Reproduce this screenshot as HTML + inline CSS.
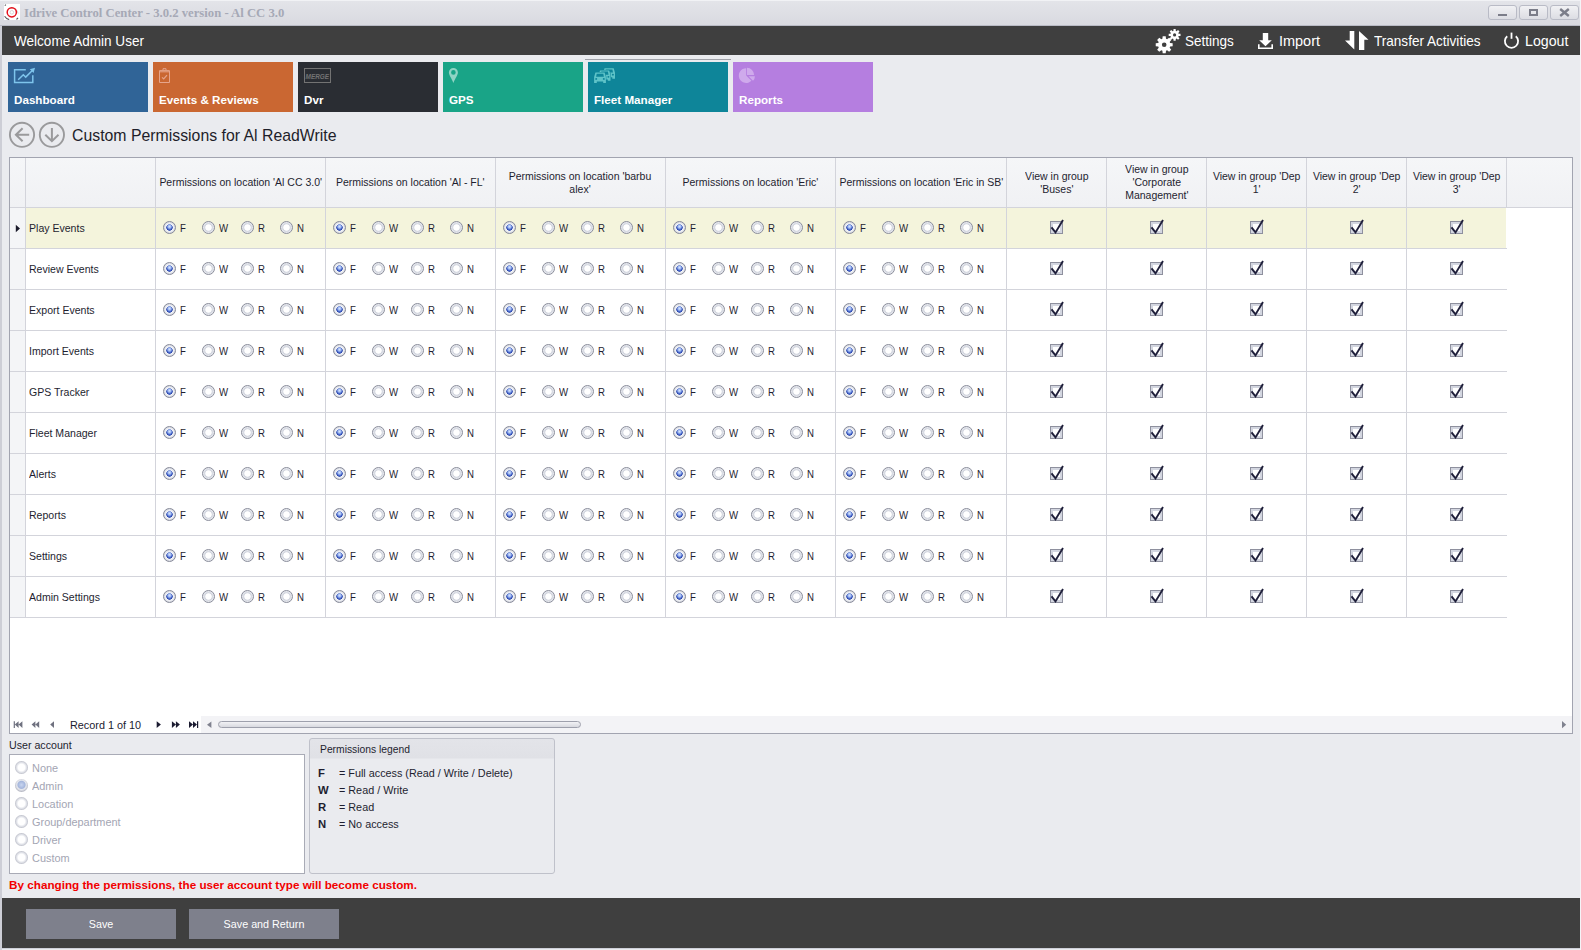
<!DOCTYPE html><html><head><meta charset="utf-8"><style>
*{margin:0;padding:0;box-sizing:border-box}
html,body{width:1581px;height:950px;overflow:hidden;background:#EAEBEF;font-family:'Liberation Sans',sans-serif}
.a{position:absolute}
.wb{position:absolute;top:5px;width:29px;height:15px;border:1px solid #B9BBC6;border-radius:3px;background:linear-gradient(#F1F1F4,#DCDDE3)}
.rd{position:absolute;width:13px;height:13px;border-radius:50%;border:1.2px solid #8A8D9B;background:radial-gradient(circle at 50% 50%,#fff 0,#fff 2.8px,#D3D6DF 3.6px,#D9DCE4 4.3px,#E9EBF0 5.3px)}
.rs{position:absolute;width:13px;height:13px;border-radius:50%;border:1.2px solid #868998;background:radial-gradient(circle at 50% 40%,rgba(220,233,255,.95) 0,rgba(175,200,248,.8) 1.6px,rgba(120,150,230,0) 2.8px),radial-gradient(circle at 50% 50%,#7D9AE6 0,#4F6ECF 1.9px,#2A46AC 2.9px,#F4F5F8 3.5px,#E6E8EE 4.6px,#D8DBE3 5.3px)}
.cb{position:absolute;width:13px;height:13px;border:1px solid #8E909E;background:#fff;box-shadow:inset 0 0 0 2px #D3D6E0}
.tl{position:absolute;font:11.2px/13px 'Liberation Sans',sans-serif;color:#1E1E30;text-align:center;white-space:nowrap;transform:scaleX(0.938)}
</style></head><body>
<div class="a" style="left:0;top:0;width:1581px;height:26px;background:linear-gradient(#F1F2F5 0,#F1F2F5 1px,#E3E4E9 1px,#D9DAE0 25px,#B9BBC5 25px)"></div>
<svg class="a" style="left:4px;top:4px" width="16" height="16" viewBox="0 0 16 16"><rect width="16" height="16" fill="#fff"/><path fill="none" stroke="#CFCFD2" stroke-width="0.9" d="M6 4.2A6.2 6.2 0 0 1 14.1 9.6"/><path fill="none" stroke="#5A5A5E" stroke-width="1.1" d="M0.6 12.2A8 8 0 0 0 5.2 15.6M12.4 15.4A8 8 0 0 0 14 13.8M0.8 1.6L1.9 0.6"/><circle cx="7.8" cy="8.3" r="4.6" fill="none" stroke="#E5101B" stroke-width="1.5"/><circle cx="7.8" cy="8.3" r="1.8" fill="none" stroke="#c8c8c8" stroke-width="0.7"/></svg>
<div class="a" style="left:24px;top:6.88px;font:bold 12.7px/12.7px 'Liberation Serif',serif;color:#A6A9B6;white-space:nowrap">Idrive Control Center - 3.0.2 version - Al CC 3.0</div>
<div class="wb" style="left:1488px"><div class="a" style="left:9px;top:8px;width:9px;height:2px;background:#7B7D89"></div></div>
<div class="wb" style="left:1519px"><div class="a" style="left:9px;top:3px;width:9px;height:7px;border:2px solid #7B7D89"></div></div>
<div class="wb" style="left:1550px"><svg class="a" style="left:8px;top:2px" width="11" height="9" viewBox="0 0 11 9"><path d="M1.2 1L9.8 8M9.8 1L1.2 8" stroke="#7B7D89" stroke-width="2.4"/></svg></div>
<div class="a" style="left:0;top:26px;width:2px;height:924px;background:#CDCED6"></div>
<div class="a" style="left:1580px;top:0;width:1px;height:950px;background:#F4F4F7"></div>
<div class="a" style="left:2px;top:26px;width:1578px;height:29px;background:#3F3F3F"></div>
<div class="a" style="left:14px;top:33.97px;font:14.57px/14.57px 'Liberation Sans',sans-serif;color:#fff;white-space:nowrap;transform:scaleX(0.93);transform-origin:0 0;">Welcome Admin User</div>
<svg class="a" style="left:1150px;top:26px" width="36" height="29"><path fill="#fff" fill-rule="evenodd" d="M22.67,17.29 L22.67,20.31 L20.13,20.60 L19.67,21.72 L21.26,23.72 L19.12,25.86 L17.12,24.27 L16.00,24.73 L15.71,27.27 L12.69,27.27 L12.40,24.73 L11.28,24.27 L9.28,25.86 L7.14,23.72 L8.73,21.72 L8.27,20.60 L5.73,20.31 L5.73,17.29 L8.27,17.00 L8.73,15.88 L7.14,13.88 L9.28,11.74 L11.28,13.33 L12.40,12.87 L12.69,10.33 L15.71,10.33 L16.00,12.87 L17.12,13.33 L19.12,11.74 L21.26,13.88 L19.67,15.88 L20.13,17.00Z M16.5,18.8 A2.3,2.3 0 1 0 11.899999999999999,18.8 A2.3,2.3 0 1 0 16.5,18.8Z M30.51,7.85 L30.51,9.95 L28.62,10.12 L28.30,10.88 L29.52,12.33 L28.03,13.82 L26.58,12.60 L25.82,12.92 L25.65,14.81 L23.55,14.81 L23.38,12.92 L22.62,12.60 L21.17,13.82 L19.68,12.33 L20.90,10.88 L20.58,10.12 L18.69,9.95 L18.69,7.85 L20.58,7.68 L20.90,6.92 L19.68,5.47 L21.17,3.98 L22.62,5.20 L23.38,4.88 L23.55,2.99 L25.65,2.99 L25.82,4.88 L26.58,5.20 L28.03,3.98 L29.52,5.47 L28.30,6.92 L28.62,7.68Z M26.200000000000003,8.9 A1.6,1.6 0 1 0 23.0,8.9 A1.6,1.6 0 1 0 26.200000000000003,8.9Z"/></svg>
<div class="a" style="left:1185.2px;top:34.03px;font:14.5px/14.5px 'Liberation Sans',sans-serif;color:#fff;white-space:nowrap;transform:scaleX(0.929);transform-origin:0 0;">Settings</div>
<svg class="a" style="left:1255px;top:26px" width="22" height="29"><path fill="#fff" d="M7.8 7H13.2V14.2H16.8L10.5 20.3L4.2 14.2H7.8Z"/><path fill="none" stroke="#fff" stroke-width="1.6" d="M3.8 18.2V22.2H17.2V18.2"/></svg>
<div class="a" style="left:1278.9px;top:34.03px;font:14.5px/14.5px 'Liberation Sans',sans-serif;color:#fff;white-space:nowrap;">Import</div>
<svg class="a" style="left:1340px;top:26px" width="32" height="29"><path fill="#fff" d="M9.7 5H14.3V23.5L5 14.6H9.7Z M19 5L28.5 13.7H24.3V24H19Z"/></svg>
<div class="a" style="left:1373.8px;top:34.03px;font:14.5px/14.5px 'Liberation Sans',sans-serif;color:#fff;white-space:nowrap;transform:scaleX(0.935);transform-origin:0 0;">Transfer Activities</div>
<svg class="a" style="left:1500px;top:26px" width="24" height="29"><path fill="none" stroke="#fff" stroke-width="1.8" d="M7.2 10.2A6.6 6.6 0 1 0 15.8 10.2"/><path stroke="#fff" stroke-width="1.8" d="M11.5 6.6V12.8"/></svg>
<div class="a" style="left:1524.6px;top:34.03px;font:14.5px/14.5px 'Liberation Sans',sans-serif;color:#fff;white-space:nowrap;transform:scaleX(0.978);transform-origin:0 0;">Logout</div>
<div class="a" style="left:8px;top:62px;width:140px;height:50px;background:#306497"></div>
<div class="a" style="left:14px;top:93.74px;font:bold 11.65px/11.65px 'Liberation Sans',sans-serif;color:#fff;white-space:nowrap;">Dashboard</div>
<svg class="a" style="left:8px;top:62px" width="40" height="30"><path fill="none" stroke="#7EC4EC" stroke-width="1.5" d="M17.8 7.8H6.6V20.4H24.8V13.2"/><path fill="none" stroke="#7EC4EC" stroke-width="1.5" d="M10.2 17.8L15.3 12.8L17.7 15.1L24.6 8.2"/><path fill="#7EC4EC" d="M27 5.7L21.8 7.2L25.6 10.9Z"/></svg>
<div class="a" style="left:153px;top:62px;width:140px;height:50px;background:#CA6732"></div>
<div class="a" style="left:159px;top:93.74px;font:bold 11.65px/11.65px 'Liberation Sans',sans-serif;color:#fff;white-space:nowrap;">Events &amp; Reviews</div>
<svg class="a" style="left:153px;top:62px" width="30" height="30"><path fill="none" stroke="#E6A58C" stroke-width="1" d="M6.5 8.6H16.5V20.5H6.5Z M6.8 9.8H16.2 M10 8.4V6.7H13V8.4"/><path fill="none" stroke="#E6A58C" stroke-width="1.2" d="M9 15.4L10.7 17L14 13.2"/></svg>
<div class="a" style="left:298px;top:62px;width:140px;height:50px;background:#2A2D33"></div>
<div class="a" style="left:304px;top:93.74px;font:bold 11.65px/11.65px 'Liberation Sans',sans-serif;color:#fff;white-space:nowrap;">Dvr</div>
<svg class="a" style="left:298px;top:62px" width="40" height="30"><rect x="6.5" y="6.5" width="26" height="14" fill="none" stroke="#737373" stroke-width="1"/><text x="7.6" y="17.1" font-family="Liberation Sans" font-weight="bold" font-style="italic" font-size="6.6" fill="#737373" textLength="23.5" lengthAdjust="spacingAndGlyphs">MERGE</text></svg>
<div class="a" style="left:443px;top:62px;width:140px;height:50px;background:#19A487"></div>
<div class="a" style="left:449px;top:93.74px;font:bold 11.65px/11.65px 'Liberation Sans',sans-serif;color:#fff;white-space:nowrap;">GPS</div>
<svg class="a" style="left:443px;top:62px" width="30" height="30"><path fill="#8FD4C4" fill-rule="evenodd" d="M10.4 5.9A4.5 4.5 0 0 0 5.9 10.4C5.9 13 8.6 16 10.4 20.9C12.2 16 14.9 13 14.9 10.4A4.5 4.5 0 0 0 10.4 5.9Z M10.4 8.1A2.3 2.3 0 1 0 10.4 12.7A2.3 2.3 0 1 0 10.4 8.1Z"/></svg>
<div class="a" style="left:588px;top:62px;width:140px;height:50px;background:#0E8599"></div>
<div class="a" style="left:594px;top:93.74px;font:bold 11.65px/11.65px 'Liberation Sans',sans-serif;color:#fff;white-space:nowrap;">Fleet Manager</div>
<svg class="a" style="left:588px;top:62px" width="30" height="30"><path fill="#0E8599" stroke="#0E8599" stroke-width="0.9" d="M15.20 16.70V10.70L16.50 6.30H25.70L27.00 10.70V16.70H24.30V15.30H17.90V16.70Z"/><path fill="#5EC3C8" fill-rule="evenodd" d="M15.20 16.70V10.70L16.50 6.30H25.70L27.00 10.70V16.70H24.30V15.30H17.90V16.70Z M17.20 10.60L17.80 7.50H24.40L25.00 10.60Z M16.30 12.70a1 0.9 0 1 0 2 0a1 0.9 0 1 0 -2 0Z M23.90 12.70a1 0.9 0 1 0 2 0a1 0.9 0 1 0 -2 0Z"/><path fill="#0E8599" stroke="#0E8599" stroke-width="0.9" d="M10.70 18.80V12.80L12.00 8.40H21.20L22.50 12.80V18.80H19.80V17.40H13.40V18.80Z"/><path fill="#5EC3C8" fill-rule="evenodd" d="M10.70 18.80V12.80L12.00 8.40H21.20L22.50 12.80V18.80H19.80V17.40H13.40V18.80Z M12.70 12.70L13.30 9.60H19.90L20.50 12.70Z M11.80 14.80a1 0.9 0 1 0 2 0a1 0.9 0 1 0 -2 0Z M19.40 14.80a1 0.9 0 1 0 2 0a1 0.9 0 1 0 -2 0Z"/><path fill="#0E8599" stroke="#0E8599" stroke-width="0.9" d="M6.10 20.90V14.90L7.40 10.50H16.60L17.90 14.90V20.90H15.20V19.50H8.80V20.90Z"/><path fill="#5EC3C8" fill-rule="evenodd" d="M6.10 20.90V14.90L7.40 10.50H16.60L17.90 14.90V20.90H15.20V19.50H8.80V20.90Z M8.10 14.80L8.70 11.70H15.30L15.90 14.80Z M7.20 16.90a1 0.9 0 1 0 2 0a1 0.9 0 1 0 -2 0Z M14.80 16.90a1 0.9 0 1 0 2 0a1 0.9 0 1 0 -2 0Z"/></svg>
<div class="a" style="left:733px;top:62px;width:140px;height:50px;background:#B57EE0"></div>
<div class="a" style="left:739px;top:93.74px;font:bold 11.65px/11.65px 'Liberation Sans',sans-serif;color:#fff;white-space:nowrap;">Reports</div>
<svg class="a" style="left:733px;top:62px" width="30" height="30"><path fill="#CFAAEC" d="M13.2 13.6V6.2A7.4 7.4 0 1 0 18.43 18.83Z"/><path fill="#CFAAEC" d="M14 12.9V5.8A7.1 7.1 0 0 1 21.1 12.9Z"/><path fill="#CFAAEC" d="M15.5 14.2H21.9A6.4 6.4 0 0 1 20.03 18.73Z"/></svg>
<div class="a" style="left:585px;top:59px;width:146px;height:1px;background:#9FA1A8"></div>
<svg class="a" style="left:8px;top:121px" width="60" height="28"><circle cx="14" cy="13.8" r="12.1" fill="none" stroke="#9A9A9C" stroke-width="1.9"/><path fill="none" stroke="#9A9A9C" stroke-width="2" d="M7.6 13.8H21.2M14.6 7.3L7.9 13.8L14.6 20.3"/><circle cx="43.9" cy="13.8" r="12.1" fill="none" stroke="#9A9A9C" stroke-width="1.9"/><path fill="none" stroke="#9A9A9C" stroke-width="2" d="M43.9 7V20.4M37.3 13.7L43.9 20.2L50.5 13.7"/></svg>
<div class="a" style="left:72.2px;top:126.61px;font:17.0px/17.0px 'Liberation Sans',sans-serif;color:#1E1E2A;white-space:nowrap;transform:scaleX(0.931);transform-origin:0 0;">Custom Permissions for Al ReadWrite</div>
<div class="a" style="left:9px;top:157px;width:1564px;height:577px;background:#fff;border:1px solid #A2A4B0"></div>
<div class="a" style="left:10px;top:158px;width:1562px;height:49px;background:linear-gradient(#F5F6F8,#F0F1F4)"></div>
<div class="a" style="left:10px;top:208px;width:15px;height:410px;background:#F4F5F7"></div>
<div class="a" style="left:26px;top:208px;width:1480px;height:40px;background:#F4F4DC"></div>
<div class="a" style="left:10px;top:207px;width:1562px;height:1px;background:#D3D4DB"></div>
<div class="a" style="left:10px;top:248px;width:1497px;height:1px;background:#D3D4DB"></div>
<div class="a" style="left:10px;top:289px;width:1497px;height:1px;background:#D3D4DB"></div>
<div class="a" style="left:10px;top:330px;width:1497px;height:1px;background:#D3D4DB"></div>
<div class="a" style="left:10px;top:371px;width:1497px;height:1px;background:#D3D4DB"></div>
<div class="a" style="left:10px;top:412px;width:1497px;height:1px;background:#D3D4DB"></div>
<div class="a" style="left:10px;top:453px;width:1497px;height:1px;background:#D3D4DB"></div>
<div class="a" style="left:10px;top:494px;width:1497px;height:1px;background:#D3D4DB"></div>
<div class="a" style="left:10px;top:535px;width:1497px;height:1px;background:#D3D4DB"></div>
<div class="a" style="left:10px;top:576px;width:1497px;height:1px;background:#D3D4DB"></div>
<div class="a" style="left:10px;top:617px;width:1497px;height:1px;background:#D3D4DB"></div>
<div class="a" style="left:25px;top:158px;width:1px;height:460px;background:#D3D4DB"></div>
<div class="a" style="left:155px;top:158px;width:1px;height:460px;background:#D3D4DB"></div>
<div class="a" style="left:325px;top:158px;width:1px;height:460px;background:#D3D4DB"></div>
<div class="a" style="left:495px;top:158px;width:1px;height:460px;background:#D3D4DB"></div>
<div class="a" style="left:665px;top:158px;width:1px;height:460px;background:#D3D4DB"></div>
<div class="a" style="left:835px;top:158px;width:1px;height:460px;background:#D3D4DB"></div>
<div class="a" style="left:1006px;top:158px;width:1px;height:460px;background:#D3D4DB"></div>
<div class="a" style="left:1106px;top:158px;width:1px;height:460px;background:#D3D4DB"></div>
<div class="a" style="left:1206px;top:158px;width:1px;height:460px;background:#D3D4DB"></div>
<div class="a" style="left:1306px;top:158px;width:1px;height:460px;background:#D3D4DB"></div>
<div class="a" style="left:1406px;top:158px;width:1px;height:460px;background:#D3D4DB"></div>
<div class="a" style="left:1506px;top:158px;width:1px;height:50px;background:#D3D4DB"></div>
<div class="a" style="left:156px;top:158px;width:169px;height:49px;display:flex;align-items:center;justify-content:center"><div class="tl" style="position:static">Permissions on location 'Al CC 3.0'</div></div>
<div class="a" style="left:326px;top:158px;width:169px;height:49px;display:flex;align-items:center;justify-content:center"><div class="tl" style="position:static">Permissions on location 'Al - FL'</div></div>
<div class="a" style="left:496px;top:158px;width:169px;height:49px;display:flex;align-items:center;justify-content:center"><div class="tl" style="position:static">Permissions on location 'barbu<br>alex'</div></div>
<div class="a" style="left:666px;top:158px;width:169px;height:49px;display:flex;align-items:center;justify-content:center"><div class="tl" style="position:static">Permissions on location 'Eric'</div></div>
<div class="a" style="left:836px;top:158px;width:170px;height:49px;display:flex;align-items:center;justify-content:center"><div class="tl" style="position:static">Permissions on location 'Eric in SB'</div></div>
<div class="a" style="left:1007px;top:158px;width:99px;height:49px;display:flex;align-items:center;justify-content:center"><div class="tl" style="position:static">View in group<br>'Buses'</div></div>
<div class="a" style="left:1107px;top:158px;width:99px;height:49px;display:flex;align-items:center;justify-content:center"><div class="tl" style="position:static">View in group<br>'Corporate<br>Management'</div></div>
<div class="a" style="left:1207px;top:158px;width:99px;height:49px;display:flex;align-items:center;justify-content:center"><div class="tl" style="position:static">View in group 'Dep<br>1'</div></div>
<div class="a" style="left:1307px;top:158px;width:99px;height:49px;display:flex;align-items:center;justify-content:center"><div class="tl" style="position:static">View in group 'Dep<br>2'</div></div>
<div class="a" style="left:1407px;top:158px;width:99px;height:49px;display:flex;align-items:center;justify-content:center"><div class="tl" style="position:static">View in group 'Dep<br>3'</div></div>
<div class="a" style="left:28.9px;top:222.90px;font:11.22px/11.22px 'Liberation Sans',sans-serif;color:#1E1E30;white-space:nowrap;transform:scaleX(0.94);transform-origin:0 0;">Play Events</div>
<div class="rs" style="left:162.8px;top:220.7px"></div>
<div class="a" style="left:179.9px;top:223.32px;font:11.2px/11.2px 'Liberation Sans',sans-serif;color:#1E1E30;white-space:nowrap;transform:scaleX(0.86);transform-origin:0 0;">F</div>
<div class="rd" style="left:201.8px;top:220.7px"></div>
<div class="a" style="left:218.9px;top:223.32px;font:11.2px/11.2px 'Liberation Sans',sans-serif;color:#1E1E30;white-space:nowrap;transform:scaleX(0.86);transform-origin:0 0;">W</div>
<div class="rd" style="left:240.8px;top:220.7px"></div>
<div class="a" style="left:257.90000000000003px;top:223.32px;font:11.2px/11.2px 'Liberation Sans',sans-serif;color:#1E1E30;white-space:nowrap;transform:scaleX(0.86);transform-origin:0 0;">R</div>
<div class="rd" style="left:279.8px;top:220.7px"></div>
<div class="a" style="left:296.90000000000003px;top:223.32px;font:11.2px/11.2px 'Liberation Sans',sans-serif;color:#1E1E30;white-space:nowrap;transform:scaleX(0.86);transform-origin:0 0;">N</div>
<div class="rs" style="left:332.8px;top:220.7px"></div>
<div class="a" style="left:349.90000000000003px;top:223.32px;font:11.2px/11.2px 'Liberation Sans',sans-serif;color:#1E1E30;white-space:nowrap;transform:scaleX(0.86);transform-origin:0 0;">F</div>
<div class="rd" style="left:371.8px;top:220.7px"></div>
<div class="a" style="left:388.90000000000003px;top:223.32px;font:11.2px/11.2px 'Liberation Sans',sans-serif;color:#1E1E30;white-space:nowrap;transform:scaleX(0.86);transform-origin:0 0;">W</div>
<div class="rd" style="left:410.8px;top:220.7px"></div>
<div class="a" style="left:427.90000000000003px;top:223.32px;font:11.2px/11.2px 'Liberation Sans',sans-serif;color:#1E1E30;white-space:nowrap;transform:scaleX(0.86);transform-origin:0 0;">R</div>
<div class="rd" style="left:449.8px;top:220.7px"></div>
<div class="a" style="left:466.90000000000003px;top:223.32px;font:11.2px/11.2px 'Liberation Sans',sans-serif;color:#1E1E30;white-space:nowrap;transform:scaleX(0.86);transform-origin:0 0;">N</div>
<div class="rs" style="left:502.8px;top:220.7px"></div>
<div class="a" style="left:519.9px;top:223.32px;font:11.2px/11.2px 'Liberation Sans',sans-serif;color:#1E1E30;white-space:nowrap;transform:scaleX(0.86);transform-origin:0 0;">F</div>
<div class="rd" style="left:541.8px;top:220.7px"></div>
<div class="a" style="left:558.9px;top:223.32px;font:11.2px/11.2px 'Liberation Sans',sans-serif;color:#1E1E30;white-space:nowrap;transform:scaleX(0.86);transform-origin:0 0;">W</div>
<div class="rd" style="left:580.8px;top:220.7px"></div>
<div class="a" style="left:597.9px;top:223.32px;font:11.2px/11.2px 'Liberation Sans',sans-serif;color:#1E1E30;white-space:nowrap;transform:scaleX(0.86);transform-origin:0 0;">R</div>
<div class="rd" style="left:619.8px;top:220.7px"></div>
<div class="a" style="left:636.9px;top:223.32px;font:11.2px/11.2px 'Liberation Sans',sans-serif;color:#1E1E30;white-space:nowrap;transform:scaleX(0.86);transform-origin:0 0;">N</div>
<div class="rs" style="left:672.8px;top:220.7px"></div>
<div class="a" style="left:689.9px;top:223.32px;font:11.2px/11.2px 'Liberation Sans',sans-serif;color:#1E1E30;white-space:nowrap;transform:scaleX(0.86);transform-origin:0 0;">F</div>
<div class="rd" style="left:711.8px;top:220.7px"></div>
<div class="a" style="left:728.9px;top:223.32px;font:11.2px/11.2px 'Liberation Sans',sans-serif;color:#1E1E30;white-space:nowrap;transform:scaleX(0.86);transform-origin:0 0;">W</div>
<div class="rd" style="left:750.8px;top:220.7px"></div>
<div class="a" style="left:767.9px;top:223.32px;font:11.2px/11.2px 'Liberation Sans',sans-serif;color:#1E1E30;white-space:nowrap;transform:scaleX(0.86);transform-origin:0 0;">R</div>
<div class="rd" style="left:789.8px;top:220.7px"></div>
<div class="a" style="left:806.9px;top:223.32px;font:11.2px/11.2px 'Liberation Sans',sans-serif;color:#1E1E30;white-space:nowrap;transform:scaleX(0.86);transform-origin:0 0;">N</div>
<div class="rs" style="left:842.8px;top:220.7px"></div>
<div class="a" style="left:859.9px;top:223.32px;font:11.2px/11.2px 'Liberation Sans',sans-serif;color:#1E1E30;white-space:nowrap;transform:scaleX(0.86);transform-origin:0 0;">F</div>
<div class="rd" style="left:881.8px;top:220.7px"></div>
<div class="a" style="left:898.9px;top:223.32px;font:11.2px/11.2px 'Liberation Sans',sans-serif;color:#1E1E30;white-space:nowrap;transform:scaleX(0.86);transform-origin:0 0;">W</div>
<div class="rd" style="left:920.8px;top:220.7px"></div>
<div class="a" style="left:937.9px;top:223.32px;font:11.2px/11.2px 'Liberation Sans',sans-serif;color:#1E1E30;white-space:nowrap;transform:scaleX(0.86);transform-origin:0 0;">R</div>
<div class="rd" style="left:959.8px;top:220.7px"></div>
<div class="a" style="left:976.9px;top:223.32px;font:11.2px/11.2px 'Liberation Sans',sans-serif;color:#1E1E30;white-space:nowrap;transform:scaleX(0.86);transform-origin:0 0;">N</div>
<div class="cb" style="left:1050px;top:221px"></div>
<svg class="a" style="left:1050px;top:219px" width="15" height="16"><path fill="none" stroke="#1F1F3A" stroke-width="1.9" d="M1.5 8.3L5.5 13.4L13 1"/></svg>
<div class="cb" style="left:1150px;top:221px"></div>
<svg class="a" style="left:1150px;top:219px" width="15" height="16"><path fill="none" stroke="#1F1F3A" stroke-width="1.9" d="M1.5 8.3L5.5 13.4L13 1"/></svg>
<div class="cb" style="left:1250px;top:221px"></div>
<svg class="a" style="left:1250px;top:219px" width="15" height="16"><path fill="none" stroke="#1F1F3A" stroke-width="1.9" d="M1.5 8.3L5.5 13.4L13 1"/></svg>
<div class="cb" style="left:1350px;top:221px"></div>
<svg class="a" style="left:1350px;top:219px" width="15" height="16"><path fill="none" stroke="#1F1F3A" stroke-width="1.9" d="M1.5 8.3L5.5 13.4L13 1"/></svg>
<div class="cb" style="left:1450px;top:221px"></div>
<svg class="a" style="left:1450px;top:219px" width="15" height="16"><path fill="none" stroke="#1F1F3A" stroke-width="1.9" d="M1.5 8.3L5.5 13.4L13 1"/></svg>
<div class="a" style="left:28.9px;top:263.90px;font:11.22px/11.22px 'Liberation Sans',sans-serif;color:#1E1E30;white-space:nowrap;transform:scaleX(0.94);transform-origin:0 0;">Review Events</div>
<div class="rs" style="left:162.8px;top:261.7px"></div>
<div class="a" style="left:179.9px;top:264.32px;font:11.2px/11.2px 'Liberation Sans',sans-serif;color:#1E1E30;white-space:nowrap;transform:scaleX(0.86);transform-origin:0 0;">F</div>
<div class="rd" style="left:201.8px;top:261.7px"></div>
<div class="a" style="left:218.9px;top:264.32px;font:11.2px/11.2px 'Liberation Sans',sans-serif;color:#1E1E30;white-space:nowrap;transform:scaleX(0.86);transform-origin:0 0;">W</div>
<div class="rd" style="left:240.8px;top:261.7px"></div>
<div class="a" style="left:257.90000000000003px;top:264.32px;font:11.2px/11.2px 'Liberation Sans',sans-serif;color:#1E1E30;white-space:nowrap;transform:scaleX(0.86);transform-origin:0 0;">R</div>
<div class="rd" style="left:279.8px;top:261.7px"></div>
<div class="a" style="left:296.90000000000003px;top:264.32px;font:11.2px/11.2px 'Liberation Sans',sans-serif;color:#1E1E30;white-space:nowrap;transform:scaleX(0.86);transform-origin:0 0;">N</div>
<div class="rs" style="left:332.8px;top:261.7px"></div>
<div class="a" style="left:349.90000000000003px;top:264.32px;font:11.2px/11.2px 'Liberation Sans',sans-serif;color:#1E1E30;white-space:nowrap;transform:scaleX(0.86);transform-origin:0 0;">F</div>
<div class="rd" style="left:371.8px;top:261.7px"></div>
<div class="a" style="left:388.90000000000003px;top:264.32px;font:11.2px/11.2px 'Liberation Sans',sans-serif;color:#1E1E30;white-space:nowrap;transform:scaleX(0.86);transform-origin:0 0;">W</div>
<div class="rd" style="left:410.8px;top:261.7px"></div>
<div class="a" style="left:427.90000000000003px;top:264.32px;font:11.2px/11.2px 'Liberation Sans',sans-serif;color:#1E1E30;white-space:nowrap;transform:scaleX(0.86);transform-origin:0 0;">R</div>
<div class="rd" style="left:449.8px;top:261.7px"></div>
<div class="a" style="left:466.90000000000003px;top:264.32px;font:11.2px/11.2px 'Liberation Sans',sans-serif;color:#1E1E30;white-space:nowrap;transform:scaleX(0.86);transform-origin:0 0;">N</div>
<div class="rs" style="left:502.8px;top:261.7px"></div>
<div class="a" style="left:519.9px;top:264.32px;font:11.2px/11.2px 'Liberation Sans',sans-serif;color:#1E1E30;white-space:nowrap;transform:scaleX(0.86);transform-origin:0 0;">F</div>
<div class="rd" style="left:541.8px;top:261.7px"></div>
<div class="a" style="left:558.9px;top:264.32px;font:11.2px/11.2px 'Liberation Sans',sans-serif;color:#1E1E30;white-space:nowrap;transform:scaleX(0.86);transform-origin:0 0;">W</div>
<div class="rd" style="left:580.8px;top:261.7px"></div>
<div class="a" style="left:597.9px;top:264.32px;font:11.2px/11.2px 'Liberation Sans',sans-serif;color:#1E1E30;white-space:nowrap;transform:scaleX(0.86);transform-origin:0 0;">R</div>
<div class="rd" style="left:619.8px;top:261.7px"></div>
<div class="a" style="left:636.9px;top:264.32px;font:11.2px/11.2px 'Liberation Sans',sans-serif;color:#1E1E30;white-space:nowrap;transform:scaleX(0.86);transform-origin:0 0;">N</div>
<div class="rs" style="left:672.8px;top:261.7px"></div>
<div class="a" style="left:689.9px;top:264.32px;font:11.2px/11.2px 'Liberation Sans',sans-serif;color:#1E1E30;white-space:nowrap;transform:scaleX(0.86);transform-origin:0 0;">F</div>
<div class="rd" style="left:711.8px;top:261.7px"></div>
<div class="a" style="left:728.9px;top:264.32px;font:11.2px/11.2px 'Liberation Sans',sans-serif;color:#1E1E30;white-space:nowrap;transform:scaleX(0.86);transform-origin:0 0;">W</div>
<div class="rd" style="left:750.8px;top:261.7px"></div>
<div class="a" style="left:767.9px;top:264.32px;font:11.2px/11.2px 'Liberation Sans',sans-serif;color:#1E1E30;white-space:nowrap;transform:scaleX(0.86);transform-origin:0 0;">R</div>
<div class="rd" style="left:789.8px;top:261.7px"></div>
<div class="a" style="left:806.9px;top:264.32px;font:11.2px/11.2px 'Liberation Sans',sans-serif;color:#1E1E30;white-space:nowrap;transform:scaleX(0.86);transform-origin:0 0;">N</div>
<div class="rs" style="left:842.8px;top:261.7px"></div>
<div class="a" style="left:859.9px;top:264.32px;font:11.2px/11.2px 'Liberation Sans',sans-serif;color:#1E1E30;white-space:nowrap;transform:scaleX(0.86);transform-origin:0 0;">F</div>
<div class="rd" style="left:881.8px;top:261.7px"></div>
<div class="a" style="left:898.9px;top:264.32px;font:11.2px/11.2px 'Liberation Sans',sans-serif;color:#1E1E30;white-space:nowrap;transform:scaleX(0.86);transform-origin:0 0;">W</div>
<div class="rd" style="left:920.8px;top:261.7px"></div>
<div class="a" style="left:937.9px;top:264.32px;font:11.2px/11.2px 'Liberation Sans',sans-serif;color:#1E1E30;white-space:nowrap;transform:scaleX(0.86);transform-origin:0 0;">R</div>
<div class="rd" style="left:959.8px;top:261.7px"></div>
<div class="a" style="left:976.9px;top:264.32px;font:11.2px/11.2px 'Liberation Sans',sans-serif;color:#1E1E30;white-space:nowrap;transform:scaleX(0.86);transform-origin:0 0;">N</div>
<div class="cb" style="left:1050px;top:262px"></div>
<svg class="a" style="left:1050px;top:260px" width="15" height="16"><path fill="none" stroke="#1F1F3A" stroke-width="1.9" d="M1.5 8.3L5.5 13.4L13 1"/></svg>
<div class="cb" style="left:1150px;top:262px"></div>
<svg class="a" style="left:1150px;top:260px" width="15" height="16"><path fill="none" stroke="#1F1F3A" stroke-width="1.9" d="M1.5 8.3L5.5 13.4L13 1"/></svg>
<div class="cb" style="left:1250px;top:262px"></div>
<svg class="a" style="left:1250px;top:260px" width="15" height="16"><path fill="none" stroke="#1F1F3A" stroke-width="1.9" d="M1.5 8.3L5.5 13.4L13 1"/></svg>
<div class="cb" style="left:1350px;top:262px"></div>
<svg class="a" style="left:1350px;top:260px" width="15" height="16"><path fill="none" stroke="#1F1F3A" stroke-width="1.9" d="M1.5 8.3L5.5 13.4L13 1"/></svg>
<div class="cb" style="left:1450px;top:262px"></div>
<svg class="a" style="left:1450px;top:260px" width="15" height="16"><path fill="none" stroke="#1F1F3A" stroke-width="1.9" d="M1.5 8.3L5.5 13.4L13 1"/></svg>
<div class="a" style="left:28.9px;top:304.90px;font:11.22px/11.22px 'Liberation Sans',sans-serif;color:#1E1E30;white-space:nowrap;transform:scaleX(0.94);transform-origin:0 0;">Export Events</div>
<div class="rs" style="left:162.8px;top:302.7px"></div>
<div class="a" style="left:179.9px;top:305.32px;font:11.2px/11.2px 'Liberation Sans',sans-serif;color:#1E1E30;white-space:nowrap;transform:scaleX(0.86);transform-origin:0 0;">F</div>
<div class="rd" style="left:201.8px;top:302.7px"></div>
<div class="a" style="left:218.9px;top:305.32px;font:11.2px/11.2px 'Liberation Sans',sans-serif;color:#1E1E30;white-space:nowrap;transform:scaleX(0.86);transform-origin:0 0;">W</div>
<div class="rd" style="left:240.8px;top:302.7px"></div>
<div class="a" style="left:257.90000000000003px;top:305.32px;font:11.2px/11.2px 'Liberation Sans',sans-serif;color:#1E1E30;white-space:nowrap;transform:scaleX(0.86);transform-origin:0 0;">R</div>
<div class="rd" style="left:279.8px;top:302.7px"></div>
<div class="a" style="left:296.90000000000003px;top:305.32px;font:11.2px/11.2px 'Liberation Sans',sans-serif;color:#1E1E30;white-space:nowrap;transform:scaleX(0.86);transform-origin:0 0;">N</div>
<div class="rs" style="left:332.8px;top:302.7px"></div>
<div class="a" style="left:349.90000000000003px;top:305.32px;font:11.2px/11.2px 'Liberation Sans',sans-serif;color:#1E1E30;white-space:nowrap;transform:scaleX(0.86);transform-origin:0 0;">F</div>
<div class="rd" style="left:371.8px;top:302.7px"></div>
<div class="a" style="left:388.90000000000003px;top:305.32px;font:11.2px/11.2px 'Liberation Sans',sans-serif;color:#1E1E30;white-space:nowrap;transform:scaleX(0.86);transform-origin:0 0;">W</div>
<div class="rd" style="left:410.8px;top:302.7px"></div>
<div class="a" style="left:427.90000000000003px;top:305.32px;font:11.2px/11.2px 'Liberation Sans',sans-serif;color:#1E1E30;white-space:nowrap;transform:scaleX(0.86);transform-origin:0 0;">R</div>
<div class="rd" style="left:449.8px;top:302.7px"></div>
<div class="a" style="left:466.90000000000003px;top:305.32px;font:11.2px/11.2px 'Liberation Sans',sans-serif;color:#1E1E30;white-space:nowrap;transform:scaleX(0.86);transform-origin:0 0;">N</div>
<div class="rs" style="left:502.8px;top:302.7px"></div>
<div class="a" style="left:519.9px;top:305.32px;font:11.2px/11.2px 'Liberation Sans',sans-serif;color:#1E1E30;white-space:nowrap;transform:scaleX(0.86);transform-origin:0 0;">F</div>
<div class="rd" style="left:541.8px;top:302.7px"></div>
<div class="a" style="left:558.9px;top:305.32px;font:11.2px/11.2px 'Liberation Sans',sans-serif;color:#1E1E30;white-space:nowrap;transform:scaleX(0.86);transform-origin:0 0;">W</div>
<div class="rd" style="left:580.8px;top:302.7px"></div>
<div class="a" style="left:597.9px;top:305.32px;font:11.2px/11.2px 'Liberation Sans',sans-serif;color:#1E1E30;white-space:nowrap;transform:scaleX(0.86);transform-origin:0 0;">R</div>
<div class="rd" style="left:619.8px;top:302.7px"></div>
<div class="a" style="left:636.9px;top:305.32px;font:11.2px/11.2px 'Liberation Sans',sans-serif;color:#1E1E30;white-space:nowrap;transform:scaleX(0.86);transform-origin:0 0;">N</div>
<div class="rs" style="left:672.8px;top:302.7px"></div>
<div class="a" style="left:689.9px;top:305.32px;font:11.2px/11.2px 'Liberation Sans',sans-serif;color:#1E1E30;white-space:nowrap;transform:scaleX(0.86);transform-origin:0 0;">F</div>
<div class="rd" style="left:711.8px;top:302.7px"></div>
<div class="a" style="left:728.9px;top:305.32px;font:11.2px/11.2px 'Liberation Sans',sans-serif;color:#1E1E30;white-space:nowrap;transform:scaleX(0.86);transform-origin:0 0;">W</div>
<div class="rd" style="left:750.8px;top:302.7px"></div>
<div class="a" style="left:767.9px;top:305.32px;font:11.2px/11.2px 'Liberation Sans',sans-serif;color:#1E1E30;white-space:nowrap;transform:scaleX(0.86);transform-origin:0 0;">R</div>
<div class="rd" style="left:789.8px;top:302.7px"></div>
<div class="a" style="left:806.9px;top:305.32px;font:11.2px/11.2px 'Liberation Sans',sans-serif;color:#1E1E30;white-space:nowrap;transform:scaleX(0.86);transform-origin:0 0;">N</div>
<div class="rs" style="left:842.8px;top:302.7px"></div>
<div class="a" style="left:859.9px;top:305.32px;font:11.2px/11.2px 'Liberation Sans',sans-serif;color:#1E1E30;white-space:nowrap;transform:scaleX(0.86);transform-origin:0 0;">F</div>
<div class="rd" style="left:881.8px;top:302.7px"></div>
<div class="a" style="left:898.9px;top:305.32px;font:11.2px/11.2px 'Liberation Sans',sans-serif;color:#1E1E30;white-space:nowrap;transform:scaleX(0.86);transform-origin:0 0;">W</div>
<div class="rd" style="left:920.8px;top:302.7px"></div>
<div class="a" style="left:937.9px;top:305.32px;font:11.2px/11.2px 'Liberation Sans',sans-serif;color:#1E1E30;white-space:nowrap;transform:scaleX(0.86);transform-origin:0 0;">R</div>
<div class="rd" style="left:959.8px;top:302.7px"></div>
<div class="a" style="left:976.9px;top:305.32px;font:11.2px/11.2px 'Liberation Sans',sans-serif;color:#1E1E30;white-space:nowrap;transform:scaleX(0.86);transform-origin:0 0;">N</div>
<div class="cb" style="left:1050px;top:303px"></div>
<svg class="a" style="left:1050px;top:301px" width="15" height="16"><path fill="none" stroke="#1F1F3A" stroke-width="1.9" d="M1.5 8.3L5.5 13.4L13 1"/></svg>
<div class="cb" style="left:1150px;top:303px"></div>
<svg class="a" style="left:1150px;top:301px" width="15" height="16"><path fill="none" stroke="#1F1F3A" stroke-width="1.9" d="M1.5 8.3L5.5 13.4L13 1"/></svg>
<div class="cb" style="left:1250px;top:303px"></div>
<svg class="a" style="left:1250px;top:301px" width="15" height="16"><path fill="none" stroke="#1F1F3A" stroke-width="1.9" d="M1.5 8.3L5.5 13.4L13 1"/></svg>
<div class="cb" style="left:1350px;top:303px"></div>
<svg class="a" style="left:1350px;top:301px" width="15" height="16"><path fill="none" stroke="#1F1F3A" stroke-width="1.9" d="M1.5 8.3L5.5 13.4L13 1"/></svg>
<div class="cb" style="left:1450px;top:303px"></div>
<svg class="a" style="left:1450px;top:301px" width="15" height="16"><path fill="none" stroke="#1F1F3A" stroke-width="1.9" d="M1.5 8.3L5.5 13.4L13 1"/></svg>
<div class="a" style="left:28.9px;top:345.90px;font:11.22px/11.22px 'Liberation Sans',sans-serif;color:#1E1E30;white-space:nowrap;transform:scaleX(0.94);transform-origin:0 0;">Import Events</div>
<div class="rs" style="left:162.8px;top:343.7px"></div>
<div class="a" style="left:179.9px;top:346.32px;font:11.2px/11.2px 'Liberation Sans',sans-serif;color:#1E1E30;white-space:nowrap;transform:scaleX(0.86);transform-origin:0 0;">F</div>
<div class="rd" style="left:201.8px;top:343.7px"></div>
<div class="a" style="left:218.9px;top:346.32px;font:11.2px/11.2px 'Liberation Sans',sans-serif;color:#1E1E30;white-space:nowrap;transform:scaleX(0.86);transform-origin:0 0;">W</div>
<div class="rd" style="left:240.8px;top:343.7px"></div>
<div class="a" style="left:257.90000000000003px;top:346.32px;font:11.2px/11.2px 'Liberation Sans',sans-serif;color:#1E1E30;white-space:nowrap;transform:scaleX(0.86);transform-origin:0 0;">R</div>
<div class="rd" style="left:279.8px;top:343.7px"></div>
<div class="a" style="left:296.90000000000003px;top:346.32px;font:11.2px/11.2px 'Liberation Sans',sans-serif;color:#1E1E30;white-space:nowrap;transform:scaleX(0.86);transform-origin:0 0;">N</div>
<div class="rs" style="left:332.8px;top:343.7px"></div>
<div class="a" style="left:349.90000000000003px;top:346.32px;font:11.2px/11.2px 'Liberation Sans',sans-serif;color:#1E1E30;white-space:nowrap;transform:scaleX(0.86);transform-origin:0 0;">F</div>
<div class="rd" style="left:371.8px;top:343.7px"></div>
<div class="a" style="left:388.90000000000003px;top:346.32px;font:11.2px/11.2px 'Liberation Sans',sans-serif;color:#1E1E30;white-space:nowrap;transform:scaleX(0.86);transform-origin:0 0;">W</div>
<div class="rd" style="left:410.8px;top:343.7px"></div>
<div class="a" style="left:427.90000000000003px;top:346.32px;font:11.2px/11.2px 'Liberation Sans',sans-serif;color:#1E1E30;white-space:nowrap;transform:scaleX(0.86);transform-origin:0 0;">R</div>
<div class="rd" style="left:449.8px;top:343.7px"></div>
<div class="a" style="left:466.90000000000003px;top:346.32px;font:11.2px/11.2px 'Liberation Sans',sans-serif;color:#1E1E30;white-space:nowrap;transform:scaleX(0.86);transform-origin:0 0;">N</div>
<div class="rs" style="left:502.8px;top:343.7px"></div>
<div class="a" style="left:519.9px;top:346.32px;font:11.2px/11.2px 'Liberation Sans',sans-serif;color:#1E1E30;white-space:nowrap;transform:scaleX(0.86);transform-origin:0 0;">F</div>
<div class="rd" style="left:541.8px;top:343.7px"></div>
<div class="a" style="left:558.9px;top:346.32px;font:11.2px/11.2px 'Liberation Sans',sans-serif;color:#1E1E30;white-space:nowrap;transform:scaleX(0.86);transform-origin:0 0;">W</div>
<div class="rd" style="left:580.8px;top:343.7px"></div>
<div class="a" style="left:597.9px;top:346.32px;font:11.2px/11.2px 'Liberation Sans',sans-serif;color:#1E1E30;white-space:nowrap;transform:scaleX(0.86);transform-origin:0 0;">R</div>
<div class="rd" style="left:619.8px;top:343.7px"></div>
<div class="a" style="left:636.9px;top:346.32px;font:11.2px/11.2px 'Liberation Sans',sans-serif;color:#1E1E30;white-space:nowrap;transform:scaleX(0.86);transform-origin:0 0;">N</div>
<div class="rs" style="left:672.8px;top:343.7px"></div>
<div class="a" style="left:689.9px;top:346.32px;font:11.2px/11.2px 'Liberation Sans',sans-serif;color:#1E1E30;white-space:nowrap;transform:scaleX(0.86);transform-origin:0 0;">F</div>
<div class="rd" style="left:711.8px;top:343.7px"></div>
<div class="a" style="left:728.9px;top:346.32px;font:11.2px/11.2px 'Liberation Sans',sans-serif;color:#1E1E30;white-space:nowrap;transform:scaleX(0.86);transform-origin:0 0;">W</div>
<div class="rd" style="left:750.8px;top:343.7px"></div>
<div class="a" style="left:767.9px;top:346.32px;font:11.2px/11.2px 'Liberation Sans',sans-serif;color:#1E1E30;white-space:nowrap;transform:scaleX(0.86);transform-origin:0 0;">R</div>
<div class="rd" style="left:789.8px;top:343.7px"></div>
<div class="a" style="left:806.9px;top:346.32px;font:11.2px/11.2px 'Liberation Sans',sans-serif;color:#1E1E30;white-space:nowrap;transform:scaleX(0.86);transform-origin:0 0;">N</div>
<div class="rs" style="left:842.8px;top:343.7px"></div>
<div class="a" style="left:859.9px;top:346.32px;font:11.2px/11.2px 'Liberation Sans',sans-serif;color:#1E1E30;white-space:nowrap;transform:scaleX(0.86);transform-origin:0 0;">F</div>
<div class="rd" style="left:881.8px;top:343.7px"></div>
<div class="a" style="left:898.9px;top:346.32px;font:11.2px/11.2px 'Liberation Sans',sans-serif;color:#1E1E30;white-space:nowrap;transform:scaleX(0.86);transform-origin:0 0;">W</div>
<div class="rd" style="left:920.8px;top:343.7px"></div>
<div class="a" style="left:937.9px;top:346.32px;font:11.2px/11.2px 'Liberation Sans',sans-serif;color:#1E1E30;white-space:nowrap;transform:scaleX(0.86);transform-origin:0 0;">R</div>
<div class="rd" style="left:959.8px;top:343.7px"></div>
<div class="a" style="left:976.9px;top:346.32px;font:11.2px/11.2px 'Liberation Sans',sans-serif;color:#1E1E30;white-space:nowrap;transform:scaleX(0.86);transform-origin:0 0;">N</div>
<div class="cb" style="left:1050px;top:344px"></div>
<svg class="a" style="left:1050px;top:342px" width="15" height="16"><path fill="none" stroke="#1F1F3A" stroke-width="1.9" d="M1.5 8.3L5.5 13.4L13 1"/></svg>
<div class="cb" style="left:1150px;top:344px"></div>
<svg class="a" style="left:1150px;top:342px" width="15" height="16"><path fill="none" stroke="#1F1F3A" stroke-width="1.9" d="M1.5 8.3L5.5 13.4L13 1"/></svg>
<div class="cb" style="left:1250px;top:344px"></div>
<svg class="a" style="left:1250px;top:342px" width="15" height="16"><path fill="none" stroke="#1F1F3A" stroke-width="1.9" d="M1.5 8.3L5.5 13.4L13 1"/></svg>
<div class="cb" style="left:1350px;top:344px"></div>
<svg class="a" style="left:1350px;top:342px" width="15" height="16"><path fill="none" stroke="#1F1F3A" stroke-width="1.9" d="M1.5 8.3L5.5 13.4L13 1"/></svg>
<div class="cb" style="left:1450px;top:344px"></div>
<svg class="a" style="left:1450px;top:342px" width="15" height="16"><path fill="none" stroke="#1F1F3A" stroke-width="1.9" d="M1.5 8.3L5.5 13.4L13 1"/></svg>
<div class="a" style="left:28.9px;top:386.90px;font:11.22px/11.22px 'Liberation Sans',sans-serif;color:#1E1E30;white-space:nowrap;transform:scaleX(0.94);transform-origin:0 0;">GPS Tracker</div>
<div class="rs" style="left:162.8px;top:384.7px"></div>
<div class="a" style="left:179.9px;top:387.32px;font:11.2px/11.2px 'Liberation Sans',sans-serif;color:#1E1E30;white-space:nowrap;transform:scaleX(0.86);transform-origin:0 0;">F</div>
<div class="rd" style="left:201.8px;top:384.7px"></div>
<div class="a" style="left:218.9px;top:387.32px;font:11.2px/11.2px 'Liberation Sans',sans-serif;color:#1E1E30;white-space:nowrap;transform:scaleX(0.86);transform-origin:0 0;">W</div>
<div class="rd" style="left:240.8px;top:384.7px"></div>
<div class="a" style="left:257.90000000000003px;top:387.32px;font:11.2px/11.2px 'Liberation Sans',sans-serif;color:#1E1E30;white-space:nowrap;transform:scaleX(0.86);transform-origin:0 0;">R</div>
<div class="rd" style="left:279.8px;top:384.7px"></div>
<div class="a" style="left:296.90000000000003px;top:387.32px;font:11.2px/11.2px 'Liberation Sans',sans-serif;color:#1E1E30;white-space:nowrap;transform:scaleX(0.86);transform-origin:0 0;">N</div>
<div class="rs" style="left:332.8px;top:384.7px"></div>
<div class="a" style="left:349.90000000000003px;top:387.32px;font:11.2px/11.2px 'Liberation Sans',sans-serif;color:#1E1E30;white-space:nowrap;transform:scaleX(0.86);transform-origin:0 0;">F</div>
<div class="rd" style="left:371.8px;top:384.7px"></div>
<div class="a" style="left:388.90000000000003px;top:387.32px;font:11.2px/11.2px 'Liberation Sans',sans-serif;color:#1E1E30;white-space:nowrap;transform:scaleX(0.86);transform-origin:0 0;">W</div>
<div class="rd" style="left:410.8px;top:384.7px"></div>
<div class="a" style="left:427.90000000000003px;top:387.32px;font:11.2px/11.2px 'Liberation Sans',sans-serif;color:#1E1E30;white-space:nowrap;transform:scaleX(0.86);transform-origin:0 0;">R</div>
<div class="rd" style="left:449.8px;top:384.7px"></div>
<div class="a" style="left:466.90000000000003px;top:387.32px;font:11.2px/11.2px 'Liberation Sans',sans-serif;color:#1E1E30;white-space:nowrap;transform:scaleX(0.86);transform-origin:0 0;">N</div>
<div class="rs" style="left:502.8px;top:384.7px"></div>
<div class="a" style="left:519.9px;top:387.32px;font:11.2px/11.2px 'Liberation Sans',sans-serif;color:#1E1E30;white-space:nowrap;transform:scaleX(0.86);transform-origin:0 0;">F</div>
<div class="rd" style="left:541.8px;top:384.7px"></div>
<div class="a" style="left:558.9px;top:387.32px;font:11.2px/11.2px 'Liberation Sans',sans-serif;color:#1E1E30;white-space:nowrap;transform:scaleX(0.86);transform-origin:0 0;">W</div>
<div class="rd" style="left:580.8px;top:384.7px"></div>
<div class="a" style="left:597.9px;top:387.32px;font:11.2px/11.2px 'Liberation Sans',sans-serif;color:#1E1E30;white-space:nowrap;transform:scaleX(0.86);transform-origin:0 0;">R</div>
<div class="rd" style="left:619.8px;top:384.7px"></div>
<div class="a" style="left:636.9px;top:387.32px;font:11.2px/11.2px 'Liberation Sans',sans-serif;color:#1E1E30;white-space:nowrap;transform:scaleX(0.86);transform-origin:0 0;">N</div>
<div class="rs" style="left:672.8px;top:384.7px"></div>
<div class="a" style="left:689.9px;top:387.32px;font:11.2px/11.2px 'Liberation Sans',sans-serif;color:#1E1E30;white-space:nowrap;transform:scaleX(0.86);transform-origin:0 0;">F</div>
<div class="rd" style="left:711.8px;top:384.7px"></div>
<div class="a" style="left:728.9px;top:387.32px;font:11.2px/11.2px 'Liberation Sans',sans-serif;color:#1E1E30;white-space:nowrap;transform:scaleX(0.86);transform-origin:0 0;">W</div>
<div class="rd" style="left:750.8px;top:384.7px"></div>
<div class="a" style="left:767.9px;top:387.32px;font:11.2px/11.2px 'Liberation Sans',sans-serif;color:#1E1E30;white-space:nowrap;transform:scaleX(0.86);transform-origin:0 0;">R</div>
<div class="rd" style="left:789.8px;top:384.7px"></div>
<div class="a" style="left:806.9px;top:387.32px;font:11.2px/11.2px 'Liberation Sans',sans-serif;color:#1E1E30;white-space:nowrap;transform:scaleX(0.86);transform-origin:0 0;">N</div>
<div class="rs" style="left:842.8px;top:384.7px"></div>
<div class="a" style="left:859.9px;top:387.32px;font:11.2px/11.2px 'Liberation Sans',sans-serif;color:#1E1E30;white-space:nowrap;transform:scaleX(0.86);transform-origin:0 0;">F</div>
<div class="rd" style="left:881.8px;top:384.7px"></div>
<div class="a" style="left:898.9px;top:387.32px;font:11.2px/11.2px 'Liberation Sans',sans-serif;color:#1E1E30;white-space:nowrap;transform:scaleX(0.86);transform-origin:0 0;">W</div>
<div class="rd" style="left:920.8px;top:384.7px"></div>
<div class="a" style="left:937.9px;top:387.32px;font:11.2px/11.2px 'Liberation Sans',sans-serif;color:#1E1E30;white-space:nowrap;transform:scaleX(0.86);transform-origin:0 0;">R</div>
<div class="rd" style="left:959.8px;top:384.7px"></div>
<div class="a" style="left:976.9px;top:387.32px;font:11.2px/11.2px 'Liberation Sans',sans-serif;color:#1E1E30;white-space:nowrap;transform:scaleX(0.86);transform-origin:0 0;">N</div>
<div class="cb" style="left:1050px;top:385px"></div>
<svg class="a" style="left:1050px;top:383px" width="15" height="16"><path fill="none" stroke="#1F1F3A" stroke-width="1.9" d="M1.5 8.3L5.5 13.4L13 1"/></svg>
<div class="cb" style="left:1150px;top:385px"></div>
<svg class="a" style="left:1150px;top:383px" width="15" height="16"><path fill="none" stroke="#1F1F3A" stroke-width="1.9" d="M1.5 8.3L5.5 13.4L13 1"/></svg>
<div class="cb" style="left:1250px;top:385px"></div>
<svg class="a" style="left:1250px;top:383px" width="15" height="16"><path fill="none" stroke="#1F1F3A" stroke-width="1.9" d="M1.5 8.3L5.5 13.4L13 1"/></svg>
<div class="cb" style="left:1350px;top:385px"></div>
<svg class="a" style="left:1350px;top:383px" width="15" height="16"><path fill="none" stroke="#1F1F3A" stroke-width="1.9" d="M1.5 8.3L5.5 13.4L13 1"/></svg>
<div class="cb" style="left:1450px;top:385px"></div>
<svg class="a" style="left:1450px;top:383px" width="15" height="16"><path fill="none" stroke="#1F1F3A" stroke-width="1.9" d="M1.5 8.3L5.5 13.4L13 1"/></svg>
<div class="a" style="left:28.9px;top:427.90px;font:11.22px/11.22px 'Liberation Sans',sans-serif;color:#1E1E30;white-space:nowrap;transform:scaleX(0.94);transform-origin:0 0;">Fleet Manager</div>
<div class="rs" style="left:162.8px;top:425.7px"></div>
<div class="a" style="left:179.9px;top:428.32px;font:11.2px/11.2px 'Liberation Sans',sans-serif;color:#1E1E30;white-space:nowrap;transform:scaleX(0.86);transform-origin:0 0;">F</div>
<div class="rd" style="left:201.8px;top:425.7px"></div>
<div class="a" style="left:218.9px;top:428.32px;font:11.2px/11.2px 'Liberation Sans',sans-serif;color:#1E1E30;white-space:nowrap;transform:scaleX(0.86);transform-origin:0 0;">W</div>
<div class="rd" style="left:240.8px;top:425.7px"></div>
<div class="a" style="left:257.90000000000003px;top:428.32px;font:11.2px/11.2px 'Liberation Sans',sans-serif;color:#1E1E30;white-space:nowrap;transform:scaleX(0.86);transform-origin:0 0;">R</div>
<div class="rd" style="left:279.8px;top:425.7px"></div>
<div class="a" style="left:296.90000000000003px;top:428.32px;font:11.2px/11.2px 'Liberation Sans',sans-serif;color:#1E1E30;white-space:nowrap;transform:scaleX(0.86);transform-origin:0 0;">N</div>
<div class="rs" style="left:332.8px;top:425.7px"></div>
<div class="a" style="left:349.90000000000003px;top:428.32px;font:11.2px/11.2px 'Liberation Sans',sans-serif;color:#1E1E30;white-space:nowrap;transform:scaleX(0.86);transform-origin:0 0;">F</div>
<div class="rd" style="left:371.8px;top:425.7px"></div>
<div class="a" style="left:388.90000000000003px;top:428.32px;font:11.2px/11.2px 'Liberation Sans',sans-serif;color:#1E1E30;white-space:nowrap;transform:scaleX(0.86);transform-origin:0 0;">W</div>
<div class="rd" style="left:410.8px;top:425.7px"></div>
<div class="a" style="left:427.90000000000003px;top:428.32px;font:11.2px/11.2px 'Liberation Sans',sans-serif;color:#1E1E30;white-space:nowrap;transform:scaleX(0.86);transform-origin:0 0;">R</div>
<div class="rd" style="left:449.8px;top:425.7px"></div>
<div class="a" style="left:466.90000000000003px;top:428.32px;font:11.2px/11.2px 'Liberation Sans',sans-serif;color:#1E1E30;white-space:nowrap;transform:scaleX(0.86);transform-origin:0 0;">N</div>
<div class="rs" style="left:502.8px;top:425.7px"></div>
<div class="a" style="left:519.9px;top:428.32px;font:11.2px/11.2px 'Liberation Sans',sans-serif;color:#1E1E30;white-space:nowrap;transform:scaleX(0.86);transform-origin:0 0;">F</div>
<div class="rd" style="left:541.8px;top:425.7px"></div>
<div class="a" style="left:558.9px;top:428.32px;font:11.2px/11.2px 'Liberation Sans',sans-serif;color:#1E1E30;white-space:nowrap;transform:scaleX(0.86);transform-origin:0 0;">W</div>
<div class="rd" style="left:580.8px;top:425.7px"></div>
<div class="a" style="left:597.9px;top:428.32px;font:11.2px/11.2px 'Liberation Sans',sans-serif;color:#1E1E30;white-space:nowrap;transform:scaleX(0.86);transform-origin:0 0;">R</div>
<div class="rd" style="left:619.8px;top:425.7px"></div>
<div class="a" style="left:636.9px;top:428.32px;font:11.2px/11.2px 'Liberation Sans',sans-serif;color:#1E1E30;white-space:nowrap;transform:scaleX(0.86);transform-origin:0 0;">N</div>
<div class="rs" style="left:672.8px;top:425.7px"></div>
<div class="a" style="left:689.9px;top:428.32px;font:11.2px/11.2px 'Liberation Sans',sans-serif;color:#1E1E30;white-space:nowrap;transform:scaleX(0.86);transform-origin:0 0;">F</div>
<div class="rd" style="left:711.8px;top:425.7px"></div>
<div class="a" style="left:728.9px;top:428.32px;font:11.2px/11.2px 'Liberation Sans',sans-serif;color:#1E1E30;white-space:nowrap;transform:scaleX(0.86);transform-origin:0 0;">W</div>
<div class="rd" style="left:750.8px;top:425.7px"></div>
<div class="a" style="left:767.9px;top:428.32px;font:11.2px/11.2px 'Liberation Sans',sans-serif;color:#1E1E30;white-space:nowrap;transform:scaleX(0.86);transform-origin:0 0;">R</div>
<div class="rd" style="left:789.8px;top:425.7px"></div>
<div class="a" style="left:806.9px;top:428.32px;font:11.2px/11.2px 'Liberation Sans',sans-serif;color:#1E1E30;white-space:nowrap;transform:scaleX(0.86);transform-origin:0 0;">N</div>
<div class="rs" style="left:842.8px;top:425.7px"></div>
<div class="a" style="left:859.9px;top:428.32px;font:11.2px/11.2px 'Liberation Sans',sans-serif;color:#1E1E30;white-space:nowrap;transform:scaleX(0.86);transform-origin:0 0;">F</div>
<div class="rd" style="left:881.8px;top:425.7px"></div>
<div class="a" style="left:898.9px;top:428.32px;font:11.2px/11.2px 'Liberation Sans',sans-serif;color:#1E1E30;white-space:nowrap;transform:scaleX(0.86);transform-origin:0 0;">W</div>
<div class="rd" style="left:920.8px;top:425.7px"></div>
<div class="a" style="left:937.9px;top:428.32px;font:11.2px/11.2px 'Liberation Sans',sans-serif;color:#1E1E30;white-space:nowrap;transform:scaleX(0.86);transform-origin:0 0;">R</div>
<div class="rd" style="left:959.8px;top:425.7px"></div>
<div class="a" style="left:976.9px;top:428.32px;font:11.2px/11.2px 'Liberation Sans',sans-serif;color:#1E1E30;white-space:nowrap;transform:scaleX(0.86);transform-origin:0 0;">N</div>
<div class="cb" style="left:1050px;top:426px"></div>
<svg class="a" style="left:1050px;top:424px" width="15" height="16"><path fill="none" stroke="#1F1F3A" stroke-width="1.9" d="M1.5 8.3L5.5 13.4L13 1"/></svg>
<div class="cb" style="left:1150px;top:426px"></div>
<svg class="a" style="left:1150px;top:424px" width="15" height="16"><path fill="none" stroke="#1F1F3A" stroke-width="1.9" d="M1.5 8.3L5.5 13.4L13 1"/></svg>
<div class="cb" style="left:1250px;top:426px"></div>
<svg class="a" style="left:1250px;top:424px" width="15" height="16"><path fill="none" stroke="#1F1F3A" stroke-width="1.9" d="M1.5 8.3L5.5 13.4L13 1"/></svg>
<div class="cb" style="left:1350px;top:426px"></div>
<svg class="a" style="left:1350px;top:424px" width="15" height="16"><path fill="none" stroke="#1F1F3A" stroke-width="1.9" d="M1.5 8.3L5.5 13.4L13 1"/></svg>
<div class="cb" style="left:1450px;top:426px"></div>
<svg class="a" style="left:1450px;top:424px" width="15" height="16"><path fill="none" stroke="#1F1F3A" stroke-width="1.9" d="M1.5 8.3L5.5 13.4L13 1"/></svg>
<div class="a" style="left:28.9px;top:468.90px;font:11.22px/11.22px 'Liberation Sans',sans-serif;color:#1E1E30;white-space:nowrap;transform:scaleX(0.94);transform-origin:0 0;">Alerts</div>
<div class="rs" style="left:162.8px;top:466.7px"></div>
<div class="a" style="left:179.9px;top:469.32px;font:11.2px/11.2px 'Liberation Sans',sans-serif;color:#1E1E30;white-space:nowrap;transform:scaleX(0.86);transform-origin:0 0;">F</div>
<div class="rd" style="left:201.8px;top:466.7px"></div>
<div class="a" style="left:218.9px;top:469.32px;font:11.2px/11.2px 'Liberation Sans',sans-serif;color:#1E1E30;white-space:nowrap;transform:scaleX(0.86);transform-origin:0 0;">W</div>
<div class="rd" style="left:240.8px;top:466.7px"></div>
<div class="a" style="left:257.90000000000003px;top:469.32px;font:11.2px/11.2px 'Liberation Sans',sans-serif;color:#1E1E30;white-space:nowrap;transform:scaleX(0.86);transform-origin:0 0;">R</div>
<div class="rd" style="left:279.8px;top:466.7px"></div>
<div class="a" style="left:296.90000000000003px;top:469.32px;font:11.2px/11.2px 'Liberation Sans',sans-serif;color:#1E1E30;white-space:nowrap;transform:scaleX(0.86);transform-origin:0 0;">N</div>
<div class="rs" style="left:332.8px;top:466.7px"></div>
<div class="a" style="left:349.90000000000003px;top:469.32px;font:11.2px/11.2px 'Liberation Sans',sans-serif;color:#1E1E30;white-space:nowrap;transform:scaleX(0.86);transform-origin:0 0;">F</div>
<div class="rd" style="left:371.8px;top:466.7px"></div>
<div class="a" style="left:388.90000000000003px;top:469.32px;font:11.2px/11.2px 'Liberation Sans',sans-serif;color:#1E1E30;white-space:nowrap;transform:scaleX(0.86);transform-origin:0 0;">W</div>
<div class="rd" style="left:410.8px;top:466.7px"></div>
<div class="a" style="left:427.90000000000003px;top:469.32px;font:11.2px/11.2px 'Liberation Sans',sans-serif;color:#1E1E30;white-space:nowrap;transform:scaleX(0.86);transform-origin:0 0;">R</div>
<div class="rd" style="left:449.8px;top:466.7px"></div>
<div class="a" style="left:466.90000000000003px;top:469.32px;font:11.2px/11.2px 'Liberation Sans',sans-serif;color:#1E1E30;white-space:nowrap;transform:scaleX(0.86);transform-origin:0 0;">N</div>
<div class="rs" style="left:502.8px;top:466.7px"></div>
<div class="a" style="left:519.9px;top:469.32px;font:11.2px/11.2px 'Liberation Sans',sans-serif;color:#1E1E30;white-space:nowrap;transform:scaleX(0.86);transform-origin:0 0;">F</div>
<div class="rd" style="left:541.8px;top:466.7px"></div>
<div class="a" style="left:558.9px;top:469.32px;font:11.2px/11.2px 'Liberation Sans',sans-serif;color:#1E1E30;white-space:nowrap;transform:scaleX(0.86);transform-origin:0 0;">W</div>
<div class="rd" style="left:580.8px;top:466.7px"></div>
<div class="a" style="left:597.9px;top:469.32px;font:11.2px/11.2px 'Liberation Sans',sans-serif;color:#1E1E30;white-space:nowrap;transform:scaleX(0.86);transform-origin:0 0;">R</div>
<div class="rd" style="left:619.8px;top:466.7px"></div>
<div class="a" style="left:636.9px;top:469.32px;font:11.2px/11.2px 'Liberation Sans',sans-serif;color:#1E1E30;white-space:nowrap;transform:scaleX(0.86);transform-origin:0 0;">N</div>
<div class="rs" style="left:672.8px;top:466.7px"></div>
<div class="a" style="left:689.9px;top:469.32px;font:11.2px/11.2px 'Liberation Sans',sans-serif;color:#1E1E30;white-space:nowrap;transform:scaleX(0.86);transform-origin:0 0;">F</div>
<div class="rd" style="left:711.8px;top:466.7px"></div>
<div class="a" style="left:728.9px;top:469.32px;font:11.2px/11.2px 'Liberation Sans',sans-serif;color:#1E1E30;white-space:nowrap;transform:scaleX(0.86);transform-origin:0 0;">W</div>
<div class="rd" style="left:750.8px;top:466.7px"></div>
<div class="a" style="left:767.9px;top:469.32px;font:11.2px/11.2px 'Liberation Sans',sans-serif;color:#1E1E30;white-space:nowrap;transform:scaleX(0.86);transform-origin:0 0;">R</div>
<div class="rd" style="left:789.8px;top:466.7px"></div>
<div class="a" style="left:806.9px;top:469.32px;font:11.2px/11.2px 'Liberation Sans',sans-serif;color:#1E1E30;white-space:nowrap;transform:scaleX(0.86);transform-origin:0 0;">N</div>
<div class="rs" style="left:842.8px;top:466.7px"></div>
<div class="a" style="left:859.9px;top:469.32px;font:11.2px/11.2px 'Liberation Sans',sans-serif;color:#1E1E30;white-space:nowrap;transform:scaleX(0.86);transform-origin:0 0;">F</div>
<div class="rd" style="left:881.8px;top:466.7px"></div>
<div class="a" style="left:898.9px;top:469.32px;font:11.2px/11.2px 'Liberation Sans',sans-serif;color:#1E1E30;white-space:nowrap;transform:scaleX(0.86);transform-origin:0 0;">W</div>
<div class="rd" style="left:920.8px;top:466.7px"></div>
<div class="a" style="left:937.9px;top:469.32px;font:11.2px/11.2px 'Liberation Sans',sans-serif;color:#1E1E30;white-space:nowrap;transform:scaleX(0.86);transform-origin:0 0;">R</div>
<div class="rd" style="left:959.8px;top:466.7px"></div>
<div class="a" style="left:976.9px;top:469.32px;font:11.2px/11.2px 'Liberation Sans',sans-serif;color:#1E1E30;white-space:nowrap;transform:scaleX(0.86);transform-origin:0 0;">N</div>
<div class="cb" style="left:1050px;top:467px"></div>
<svg class="a" style="left:1050px;top:465px" width="15" height="16"><path fill="none" stroke="#1F1F3A" stroke-width="1.9" d="M1.5 8.3L5.5 13.4L13 1"/></svg>
<div class="cb" style="left:1150px;top:467px"></div>
<svg class="a" style="left:1150px;top:465px" width="15" height="16"><path fill="none" stroke="#1F1F3A" stroke-width="1.9" d="M1.5 8.3L5.5 13.4L13 1"/></svg>
<div class="cb" style="left:1250px;top:467px"></div>
<svg class="a" style="left:1250px;top:465px" width="15" height="16"><path fill="none" stroke="#1F1F3A" stroke-width="1.9" d="M1.5 8.3L5.5 13.4L13 1"/></svg>
<div class="cb" style="left:1350px;top:467px"></div>
<svg class="a" style="left:1350px;top:465px" width="15" height="16"><path fill="none" stroke="#1F1F3A" stroke-width="1.9" d="M1.5 8.3L5.5 13.4L13 1"/></svg>
<div class="cb" style="left:1450px;top:467px"></div>
<svg class="a" style="left:1450px;top:465px" width="15" height="16"><path fill="none" stroke="#1F1F3A" stroke-width="1.9" d="M1.5 8.3L5.5 13.4L13 1"/></svg>
<div class="a" style="left:28.9px;top:509.90px;font:11.22px/11.22px 'Liberation Sans',sans-serif;color:#1E1E30;white-space:nowrap;transform:scaleX(0.94);transform-origin:0 0;">Reports</div>
<div class="rs" style="left:162.8px;top:507.7px"></div>
<div class="a" style="left:179.9px;top:510.32px;font:11.2px/11.2px 'Liberation Sans',sans-serif;color:#1E1E30;white-space:nowrap;transform:scaleX(0.86);transform-origin:0 0;">F</div>
<div class="rd" style="left:201.8px;top:507.7px"></div>
<div class="a" style="left:218.9px;top:510.32px;font:11.2px/11.2px 'Liberation Sans',sans-serif;color:#1E1E30;white-space:nowrap;transform:scaleX(0.86);transform-origin:0 0;">W</div>
<div class="rd" style="left:240.8px;top:507.7px"></div>
<div class="a" style="left:257.90000000000003px;top:510.32px;font:11.2px/11.2px 'Liberation Sans',sans-serif;color:#1E1E30;white-space:nowrap;transform:scaleX(0.86);transform-origin:0 0;">R</div>
<div class="rd" style="left:279.8px;top:507.7px"></div>
<div class="a" style="left:296.90000000000003px;top:510.32px;font:11.2px/11.2px 'Liberation Sans',sans-serif;color:#1E1E30;white-space:nowrap;transform:scaleX(0.86);transform-origin:0 0;">N</div>
<div class="rs" style="left:332.8px;top:507.7px"></div>
<div class="a" style="left:349.90000000000003px;top:510.32px;font:11.2px/11.2px 'Liberation Sans',sans-serif;color:#1E1E30;white-space:nowrap;transform:scaleX(0.86);transform-origin:0 0;">F</div>
<div class="rd" style="left:371.8px;top:507.7px"></div>
<div class="a" style="left:388.90000000000003px;top:510.32px;font:11.2px/11.2px 'Liberation Sans',sans-serif;color:#1E1E30;white-space:nowrap;transform:scaleX(0.86);transform-origin:0 0;">W</div>
<div class="rd" style="left:410.8px;top:507.7px"></div>
<div class="a" style="left:427.90000000000003px;top:510.32px;font:11.2px/11.2px 'Liberation Sans',sans-serif;color:#1E1E30;white-space:nowrap;transform:scaleX(0.86);transform-origin:0 0;">R</div>
<div class="rd" style="left:449.8px;top:507.7px"></div>
<div class="a" style="left:466.90000000000003px;top:510.32px;font:11.2px/11.2px 'Liberation Sans',sans-serif;color:#1E1E30;white-space:nowrap;transform:scaleX(0.86);transform-origin:0 0;">N</div>
<div class="rs" style="left:502.8px;top:507.7px"></div>
<div class="a" style="left:519.9px;top:510.32px;font:11.2px/11.2px 'Liberation Sans',sans-serif;color:#1E1E30;white-space:nowrap;transform:scaleX(0.86);transform-origin:0 0;">F</div>
<div class="rd" style="left:541.8px;top:507.7px"></div>
<div class="a" style="left:558.9px;top:510.32px;font:11.2px/11.2px 'Liberation Sans',sans-serif;color:#1E1E30;white-space:nowrap;transform:scaleX(0.86);transform-origin:0 0;">W</div>
<div class="rd" style="left:580.8px;top:507.7px"></div>
<div class="a" style="left:597.9px;top:510.32px;font:11.2px/11.2px 'Liberation Sans',sans-serif;color:#1E1E30;white-space:nowrap;transform:scaleX(0.86);transform-origin:0 0;">R</div>
<div class="rd" style="left:619.8px;top:507.7px"></div>
<div class="a" style="left:636.9px;top:510.32px;font:11.2px/11.2px 'Liberation Sans',sans-serif;color:#1E1E30;white-space:nowrap;transform:scaleX(0.86);transform-origin:0 0;">N</div>
<div class="rs" style="left:672.8px;top:507.7px"></div>
<div class="a" style="left:689.9px;top:510.32px;font:11.2px/11.2px 'Liberation Sans',sans-serif;color:#1E1E30;white-space:nowrap;transform:scaleX(0.86);transform-origin:0 0;">F</div>
<div class="rd" style="left:711.8px;top:507.7px"></div>
<div class="a" style="left:728.9px;top:510.32px;font:11.2px/11.2px 'Liberation Sans',sans-serif;color:#1E1E30;white-space:nowrap;transform:scaleX(0.86);transform-origin:0 0;">W</div>
<div class="rd" style="left:750.8px;top:507.7px"></div>
<div class="a" style="left:767.9px;top:510.32px;font:11.2px/11.2px 'Liberation Sans',sans-serif;color:#1E1E30;white-space:nowrap;transform:scaleX(0.86);transform-origin:0 0;">R</div>
<div class="rd" style="left:789.8px;top:507.7px"></div>
<div class="a" style="left:806.9px;top:510.32px;font:11.2px/11.2px 'Liberation Sans',sans-serif;color:#1E1E30;white-space:nowrap;transform:scaleX(0.86);transform-origin:0 0;">N</div>
<div class="rs" style="left:842.8px;top:507.7px"></div>
<div class="a" style="left:859.9px;top:510.32px;font:11.2px/11.2px 'Liberation Sans',sans-serif;color:#1E1E30;white-space:nowrap;transform:scaleX(0.86);transform-origin:0 0;">F</div>
<div class="rd" style="left:881.8px;top:507.7px"></div>
<div class="a" style="left:898.9px;top:510.32px;font:11.2px/11.2px 'Liberation Sans',sans-serif;color:#1E1E30;white-space:nowrap;transform:scaleX(0.86);transform-origin:0 0;">W</div>
<div class="rd" style="left:920.8px;top:507.7px"></div>
<div class="a" style="left:937.9px;top:510.32px;font:11.2px/11.2px 'Liberation Sans',sans-serif;color:#1E1E30;white-space:nowrap;transform:scaleX(0.86);transform-origin:0 0;">R</div>
<div class="rd" style="left:959.8px;top:507.7px"></div>
<div class="a" style="left:976.9px;top:510.32px;font:11.2px/11.2px 'Liberation Sans',sans-serif;color:#1E1E30;white-space:nowrap;transform:scaleX(0.86);transform-origin:0 0;">N</div>
<div class="cb" style="left:1050px;top:508px"></div>
<svg class="a" style="left:1050px;top:506px" width="15" height="16"><path fill="none" stroke="#1F1F3A" stroke-width="1.9" d="M1.5 8.3L5.5 13.4L13 1"/></svg>
<div class="cb" style="left:1150px;top:508px"></div>
<svg class="a" style="left:1150px;top:506px" width="15" height="16"><path fill="none" stroke="#1F1F3A" stroke-width="1.9" d="M1.5 8.3L5.5 13.4L13 1"/></svg>
<div class="cb" style="left:1250px;top:508px"></div>
<svg class="a" style="left:1250px;top:506px" width="15" height="16"><path fill="none" stroke="#1F1F3A" stroke-width="1.9" d="M1.5 8.3L5.5 13.4L13 1"/></svg>
<div class="cb" style="left:1350px;top:508px"></div>
<svg class="a" style="left:1350px;top:506px" width="15" height="16"><path fill="none" stroke="#1F1F3A" stroke-width="1.9" d="M1.5 8.3L5.5 13.4L13 1"/></svg>
<div class="cb" style="left:1450px;top:508px"></div>
<svg class="a" style="left:1450px;top:506px" width="15" height="16"><path fill="none" stroke="#1F1F3A" stroke-width="1.9" d="M1.5 8.3L5.5 13.4L13 1"/></svg>
<div class="a" style="left:28.9px;top:550.90px;font:11.22px/11.22px 'Liberation Sans',sans-serif;color:#1E1E30;white-space:nowrap;transform:scaleX(0.94);transform-origin:0 0;">Settings</div>
<div class="rs" style="left:162.8px;top:548.7px"></div>
<div class="a" style="left:179.9px;top:551.32px;font:11.2px/11.2px 'Liberation Sans',sans-serif;color:#1E1E30;white-space:nowrap;transform:scaleX(0.86);transform-origin:0 0;">F</div>
<div class="rd" style="left:201.8px;top:548.7px"></div>
<div class="a" style="left:218.9px;top:551.32px;font:11.2px/11.2px 'Liberation Sans',sans-serif;color:#1E1E30;white-space:nowrap;transform:scaleX(0.86);transform-origin:0 0;">W</div>
<div class="rd" style="left:240.8px;top:548.7px"></div>
<div class="a" style="left:257.90000000000003px;top:551.32px;font:11.2px/11.2px 'Liberation Sans',sans-serif;color:#1E1E30;white-space:nowrap;transform:scaleX(0.86);transform-origin:0 0;">R</div>
<div class="rd" style="left:279.8px;top:548.7px"></div>
<div class="a" style="left:296.90000000000003px;top:551.32px;font:11.2px/11.2px 'Liberation Sans',sans-serif;color:#1E1E30;white-space:nowrap;transform:scaleX(0.86);transform-origin:0 0;">N</div>
<div class="rs" style="left:332.8px;top:548.7px"></div>
<div class="a" style="left:349.90000000000003px;top:551.32px;font:11.2px/11.2px 'Liberation Sans',sans-serif;color:#1E1E30;white-space:nowrap;transform:scaleX(0.86);transform-origin:0 0;">F</div>
<div class="rd" style="left:371.8px;top:548.7px"></div>
<div class="a" style="left:388.90000000000003px;top:551.32px;font:11.2px/11.2px 'Liberation Sans',sans-serif;color:#1E1E30;white-space:nowrap;transform:scaleX(0.86);transform-origin:0 0;">W</div>
<div class="rd" style="left:410.8px;top:548.7px"></div>
<div class="a" style="left:427.90000000000003px;top:551.32px;font:11.2px/11.2px 'Liberation Sans',sans-serif;color:#1E1E30;white-space:nowrap;transform:scaleX(0.86);transform-origin:0 0;">R</div>
<div class="rd" style="left:449.8px;top:548.7px"></div>
<div class="a" style="left:466.90000000000003px;top:551.32px;font:11.2px/11.2px 'Liberation Sans',sans-serif;color:#1E1E30;white-space:nowrap;transform:scaleX(0.86);transform-origin:0 0;">N</div>
<div class="rs" style="left:502.8px;top:548.7px"></div>
<div class="a" style="left:519.9px;top:551.32px;font:11.2px/11.2px 'Liberation Sans',sans-serif;color:#1E1E30;white-space:nowrap;transform:scaleX(0.86);transform-origin:0 0;">F</div>
<div class="rd" style="left:541.8px;top:548.7px"></div>
<div class="a" style="left:558.9px;top:551.32px;font:11.2px/11.2px 'Liberation Sans',sans-serif;color:#1E1E30;white-space:nowrap;transform:scaleX(0.86);transform-origin:0 0;">W</div>
<div class="rd" style="left:580.8px;top:548.7px"></div>
<div class="a" style="left:597.9px;top:551.32px;font:11.2px/11.2px 'Liberation Sans',sans-serif;color:#1E1E30;white-space:nowrap;transform:scaleX(0.86);transform-origin:0 0;">R</div>
<div class="rd" style="left:619.8px;top:548.7px"></div>
<div class="a" style="left:636.9px;top:551.32px;font:11.2px/11.2px 'Liberation Sans',sans-serif;color:#1E1E30;white-space:nowrap;transform:scaleX(0.86);transform-origin:0 0;">N</div>
<div class="rs" style="left:672.8px;top:548.7px"></div>
<div class="a" style="left:689.9px;top:551.32px;font:11.2px/11.2px 'Liberation Sans',sans-serif;color:#1E1E30;white-space:nowrap;transform:scaleX(0.86);transform-origin:0 0;">F</div>
<div class="rd" style="left:711.8px;top:548.7px"></div>
<div class="a" style="left:728.9px;top:551.32px;font:11.2px/11.2px 'Liberation Sans',sans-serif;color:#1E1E30;white-space:nowrap;transform:scaleX(0.86);transform-origin:0 0;">W</div>
<div class="rd" style="left:750.8px;top:548.7px"></div>
<div class="a" style="left:767.9px;top:551.32px;font:11.2px/11.2px 'Liberation Sans',sans-serif;color:#1E1E30;white-space:nowrap;transform:scaleX(0.86);transform-origin:0 0;">R</div>
<div class="rd" style="left:789.8px;top:548.7px"></div>
<div class="a" style="left:806.9px;top:551.32px;font:11.2px/11.2px 'Liberation Sans',sans-serif;color:#1E1E30;white-space:nowrap;transform:scaleX(0.86);transform-origin:0 0;">N</div>
<div class="rs" style="left:842.8px;top:548.7px"></div>
<div class="a" style="left:859.9px;top:551.32px;font:11.2px/11.2px 'Liberation Sans',sans-serif;color:#1E1E30;white-space:nowrap;transform:scaleX(0.86);transform-origin:0 0;">F</div>
<div class="rd" style="left:881.8px;top:548.7px"></div>
<div class="a" style="left:898.9px;top:551.32px;font:11.2px/11.2px 'Liberation Sans',sans-serif;color:#1E1E30;white-space:nowrap;transform:scaleX(0.86);transform-origin:0 0;">W</div>
<div class="rd" style="left:920.8px;top:548.7px"></div>
<div class="a" style="left:937.9px;top:551.32px;font:11.2px/11.2px 'Liberation Sans',sans-serif;color:#1E1E30;white-space:nowrap;transform:scaleX(0.86);transform-origin:0 0;">R</div>
<div class="rd" style="left:959.8px;top:548.7px"></div>
<div class="a" style="left:976.9px;top:551.32px;font:11.2px/11.2px 'Liberation Sans',sans-serif;color:#1E1E30;white-space:nowrap;transform:scaleX(0.86);transform-origin:0 0;">N</div>
<div class="cb" style="left:1050px;top:549px"></div>
<svg class="a" style="left:1050px;top:547px" width="15" height="16"><path fill="none" stroke="#1F1F3A" stroke-width="1.9" d="M1.5 8.3L5.5 13.4L13 1"/></svg>
<div class="cb" style="left:1150px;top:549px"></div>
<svg class="a" style="left:1150px;top:547px" width="15" height="16"><path fill="none" stroke="#1F1F3A" stroke-width="1.9" d="M1.5 8.3L5.5 13.4L13 1"/></svg>
<div class="cb" style="left:1250px;top:549px"></div>
<svg class="a" style="left:1250px;top:547px" width="15" height="16"><path fill="none" stroke="#1F1F3A" stroke-width="1.9" d="M1.5 8.3L5.5 13.4L13 1"/></svg>
<div class="cb" style="left:1350px;top:549px"></div>
<svg class="a" style="left:1350px;top:547px" width="15" height="16"><path fill="none" stroke="#1F1F3A" stroke-width="1.9" d="M1.5 8.3L5.5 13.4L13 1"/></svg>
<div class="cb" style="left:1450px;top:549px"></div>
<svg class="a" style="left:1450px;top:547px" width="15" height="16"><path fill="none" stroke="#1F1F3A" stroke-width="1.9" d="M1.5 8.3L5.5 13.4L13 1"/></svg>
<div class="a" style="left:28.9px;top:591.90px;font:11.22px/11.22px 'Liberation Sans',sans-serif;color:#1E1E30;white-space:nowrap;transform:scaleX(0.94);transform-origin:0 0;">Admin Settings</div>
<div class="rs" style="left:162.8px;top:589.7px"></div>
<div class="a" style="left:179.9px;top:592.32px;font:11.2px/11.2px 'Liberation Sans',sans-serif;color:#1E1E30;white-space:nowrap;transform:scaleX(0.86);transform-origin:0 0;">F</div>
<div class="rd" style="left:201.8px;top:589.7px"></div>
<div class="a" style="left:218.9px;top:592.32px;font:11.2px/11.2px 'Liberation Sans',sans-serif;color:#1E1E30;white-space:nowrap;transform:scaleX(0.86);transform-origin:0 0;">W</div>
<div class="rd" style="left:240.8px;top:589.7px"></div>
<div class="a" style="left:257.90000000000003px;top:592.32px;font:11.2px/11.2px 'Liberation Sans',sans-serif;color:#1E1E30;white-space:nowrap;transform:scaleX(0.86);transform-origin:0 0;">R</div>
<div class="rd" style="left:279.8px;top:589.7px"></div>
<div class="a" style="left:296.90000000000003px;top:592.32px;font:11.2px/11.2px 'Liberation Sans',sans-serif;color:#1E1E30;white-space:nowrap;transform:scaleX(0.86);transform-origin:0 0;">N</div>
<div class="rs" style="left:332.8px;top:589.7px"></div>
<div class="a" style="left:349.90000000000003px;top:592.32px;font:11.2px/11.2px 'Liberation Sans',sans-serif;color:#1E1E30;white-space:nowrap;transform:scaleX(0.86);transform-origin:0 0;">F</div>
<div class="rd" style="left:371.8px;top:589.7px"></div>
<div class="a" style="left:388.90000000000003px;top:592.32px;font:11.2px/11.2px 'Liberation Sans',sans-serif;color:#1E1E30;white-space:nowrap;transform:scaleX(0.86);transform-origin:0 0;">W</div>
<div class="rd" style="left:410.8px;top:589.7px"></div>
<div class="a" style="left:427.90000000000003px;top:592.32px;font:11.2px/11.2px 'Liberation Sans',sans-serif;color:#1E1E30;white-space:nowrap;transform:scaleX(0.86);transform-origin:0 0;">R</div>
<div class="rd" style="left:449.8px;top:589.7px"></div>
<div class="a" style="left:466.90000000000003px;top:592.32px;font:11.2px/11.2px 'Liberation Sans',sans-serif;color:#1E1E30;white-space:nowrap;transform:scaleX(0.86);transform-origin:0 0;">N</div>
<div class="rs" style="left:502.8px;top:589.7px"></div>
<div class="a" style="left:519.9px;top:592.32px;font:11.2px/11.2px 'Liberation Sans',sans-serif;color:#1E1E30;white-space:nowrap;transform:scaleX(0.86);transform-origin:0 0;">F</div>
<div class="rd" style="left:541.8px;top:589.7px"></div>
<div class="a" style="left:558.9px;top:592.32px;font:11.2px/11.2px 'Liberation Sans',sans-serif;color:#1E1E30;white-space:nowrap;transform:scaleX(0.86);transform-origin:0 0;">W</div>
<div class="rd" style="left:580.8px;top:589.7px"></div>
<div class="a" style="left:597.9px;top:592.32px;font:11.2px/11.2px 'Liberation Sans',sans-serif;color:#1E1E30;white-space:nowrap;transform:scaleX(0.86);transform-origin:0 0;">R</div>
<div class="rd" style="left:619.8px;top:589.7px"></div>
<div class="a" style="left:636.9px;top:592.32px;font:11.2px/11.2px 'Liberation Sans',sans-serif;color:#1E1E30;white-space:nowrap;transform:scaleX(0.86);transform-origin:0 0;">N</div>
<div class="rs" style="left:672.8px;top:589.7px"></div>
<div class="a" style="left:689.9px;top:592.32px;font:11.2px/11.2px 'Liberation Sans',sans-serif;color:#1E1E30;white-space:nowrap;transform:scaleX(0.86);transform-origin:0 0;">F</div>
<div class="rd" style="left:711.8px;top:589.7px"></div>
<div class="a" style="left:728.9px;top:592.32px;font:11.2px/11.2px 'Liberation Sans',sans-serif;color:#1E1E30;white-space:nowrap;transform:scaleX(0.86);transform-origin:0 0;">W</div>
<div class="rd" style="left:750.8px;top:589.7px"></div>
<div class="a" style="left:767.9px;top:592.32px;font:11.2px/11.2px 'Liberation Sans',sans-serif;color:#1E1E30;white-space:nowrap;transform:scaleX(0.86);transform-origin:0 0;">R</div>
<div class="rd" style="left:789.8px;top:589.7px"></div>
<div class="a" style="left:806.9px;top:592.32px;font:11.2px/11.2px 'Liberation Sans',sans-serif;color:#1E1E30;white-space:nowrap;transform:scaleX(0.86);transform-origin:0 0;">N</div>
<div class="rs" style="left:842.8px;top:589.7px"></div>
<div class="a" style="left:859.9px;top:592.32px;font:11.2px/11.2px 'Liberation Sans',sans-serif;color:#1E1E30;white-space:nowrap;transform:scaleX(0.86);transform-origin:0 0;">F</div>
<div class="rd" style="left:881.8px;top:589.7px"></div>
<div class="a" style="left:898.9px;top:592.32px;font:11.2px/11.2px 'Liberation Sans',sans-serif;color:#1E1E30;white-space:nowrap;transform:scaleX(0.86);transform-origin:0 0;">W</div>
<div class="rd" style="left:920.8px;top:589.7px"></div>
<div class="a" style="left:937.9px;top:592.32px;font:11.2px/11.2px 'Liberation Sans',sans-serif;color:#1E1E30;white-space:nowrap;transform:scaleX(0.86);transform-origin:0 0;">R</div>
<div class="rd" style="left:959.8px;top:589.7px"></div>
<div class="a" style="left:976.9px;top:592.32px;font:11.2px/11.2px 'Liberation Sans',sans-serif;color:#1E1E30;white-space:nowrap;transform:scaleX(0.86);transform-origin:0 0;">N</div>
<div class="cb" style="left:1050px;top:590px"></div>
<svg class="a" style="left:1050px;top:588px" width="15" height="16"><path fill="none" stroke="#1F1F3A" stroke-width="1.9" d="M1.5 8.3L5.5 13.4L13 1"/></svg>
<div class="cb" style="left:1150px;top:590px"></div>
<svg class="a" style="left:1150px;top:588px" width="15" height="16"><path fill="none" stroke="#1F1F3A" stroke-width="1.9" d="M1.5 8.3L5.5 13.4L13 1"/></svg>
<div class="cb" style="left:1250px;top:590px"></div>
<svg class="a" style="left:1250px;top:588px" width="15" height="16"><path fill="none" stroke="#1F1F3A" stroke-width="1.9" d="M1.5 8.3L5.5 13.4L13 1"/></svg>
<div class="cb" style="left:1350px;top:590px"></div>
<svg class="a" style="left:1350px;top:588px" width="15" height="16"><path fill="none" stroke="#1F1F3A" stroke-width="1.9" d="M1.5 8.3L5.5 13.4L13 1"/></svg>
<div class="cb" style="left:1450px;top:590px"></div>
<svg class="a" style="left:1450px;top:588px" width="15" height="16"><path fill="none" stroke="#1F1F3A" stroke-width="1.9" d="M1.5 8.3L5.5 13.4L13 1"/></svg>
<svg class="a" style="left:15px;top:224px" width="6" height="9"><path fill="#1A1A2A" d="M0.8 0.8L5 4.5L0.8 8.2Z"/></svg>
<div class="a" style="left:201px;top:716px;width:1371px;height:17px;background:#F3F3F6"></div>
<svg class="a" style="left:10px;top:716px" width="195" height="17"><path fill="#6F717F" d="M3.7 5.3H4.9V12H3.7Z M4.8 8.6L8.6 5.3V12Z M8.6 8.6L12.4 5.3V12Z"/><path fill="#6F717F" d="M21.6 8.6L25.4 5.3V12Z M25.4 8.6L29.2 5.3V12Z"/><path fill="#6F717F" d="M40.2 8.6L44 5.3V12Z"/><path fill="#1B1B30" d="M146.7 5.3L150.9 8.6L146.7 12Z"/><path fill="#1B1B30" d="M161.9 5.3L165.9 8.6L161.9 12Z M165.9 5.3L169.9 8.6L165.9 12Z"/><path fill="#1B1B30" d="M179 5.3L183 8.6L179 12Z M183 5.3L187 8.6L183 12Z M187 5.3H188.2V12H187Z"/></svg>
<div class="a" style="left:70.1px;top:720.12px;font:11.2px/11.2px 'Liberation Sans',sans-serif;color:#1B1B30;white-space:nowrap;transform:scaleX(0.969);transform-origin:0 0;">Record 1 of 10</div>
<svg class="a" style="left:201px;top:716px" width="20" height="17"><path fill="#80828F" d="M10.4 5.6L6 8.8L10.4 12Z"/></svg>
<div class="a" style="left:218px;top:720.8px;width:363px;height:7.4px;border-radius:4px;border:1.3px solid #9EA0AC;background:linear-gradient(#F2F2F5,#D8D9DF)"></div>
<svg class="a" style="left:1555px;top:716px" width="17" height="17"><path fill="#80828F" d="M7 5L11.2 8.7L7 12.2Z"/></svg>
<div class="a" style="left:8.7px;top:740.32px;font:11.2px/11.2px 'Liberation Sans',sans-serif;color:#1E1E30;white-space:nowrap;transform:scaleX(0.951);transform-origin:0 0;">User account</div>
<div class="a" style="left:9px;top:754px;width:296px;height:120px;background:#fff;border:1px solid #A9ABB6"></div>
<div class="a" style="left:14.7px;top:760.8px;width:13px;height:13px;border-radius:50%;background:radial-gradient(circle at 50% 50%,#fff 0,#fff 3.4px,#F2F3F6 4px,#DADCE3 5.3px,#B9BBC6 6.5px)"></div>
<div class="a" style="left:31.6px;top:762.62px;font:11.2px/11.2px 'Liberation Sans',sans-serif;color:#A3A5B3;white-space:nowrap;transform:scaleX(0.976);transform-origin:0 0;">None</div>
<div class="a" style="left:14.7px;top:778.8px;width:13px;height:13px;border-radius:50%;background:radial-gradient(circle at 50% 45%,#C9D6F0 0,#A5B6DC 3.6px,#E6E8EE 4.6px,#D6D8E0 5.6px,#B9BBC6 6.5px)"></div>
<div class="a" style="left:31.6px;top:780.62px;font:11.2px/11.2px 'Liberation Sans',sans-serif;color:#A3A5B3;white-space:nowrap;transform:scaleX(0.976);transform-origin:0 0;">Admin</div>
<div class="a" style="left:14.7px;top:796.8px;width:13px;height:13px;border-radius:50%;background:radial-gradient(circle at 50% 50%,#fff 0,#fff 3.4px,#F2F3F6 4px,#DADCE3 5.3px,#B9BBC6 6.5px)"></div>
<div class="a" style="left:31.6px;top:798.62px;font:11.2px/11.2px 'Liberation Sans',sans-serif;color:#A3A5B3;white-space:nowrap;transform:scaleX(0.976);transform-origin:0 0;">Location</div>
<div class="a" style="left:14.7px;top:814.8px;width:13px;height:13px;border-radius:50%;background:radial-gradient(circle at 50% 50%,#fff 0,#fff 3.4px,#F2F3F6 4px,#DADCE3 5.3px,#B9BBC6 6.5px)"></div>
<div class="a" style="left:31.6px;top:816.62px;font:11.2px/11.2px 'Liberation Sans',sans-serif;color:#A3A5B3;white-space:nowrap;transform:scaleX(0.976);transform-origin:0 0;">Group/department</div>
<div class="a" style="left:14.7px;top:832.8px;width:13px;height:13px;border-radius:50%;background:radial-gradient(circle at 50% 50%,#fff 0,#fff 3.4px,#F2F3F6 4px,#DADCE3 5.3px,#B9BBC6 6.5px)"></div>
<div class="a" style="left:31.6px;top:834.62px;font:11.2px/11.2px 'Liberation Sans',sans-serif;color:#A3A5B3;white-space:nowrap;transform:scaleX(0.976);transform-origin:0 0;">Driver</div>
<div class="a" style="left:14.7px;top:850.8px;width:13px;height:13px;border-radius:50%;background:radial-gradient(circle at 50% 50%,#fff 0,#fff 3.4px,#F2F3F6 4px,#DADCE3 5.3px,#B9BBC6 6.5px)"></div>
<div class="a" style="left:31.6px;top:852.62px;font:11.2px/11.2px 'Liberation Sans',sans-serif;color:#A3A5B3;white-space:nowrap;transform:scaleX(0.976);transform-origin:0 0;">Custom</div>
<div class="a" style="left:309px;top:738px;width:246px;height:136px;border:1px solid #BFC1CA;border-radius:3px;background:linear-gradient(#E3E4E9 0,#E0E1E6 19px,#EAEBEF 20px,#EAEBEF)"></div>
<div class="a" style="left:320.2px;top:744.12px;font:11.2px/11.2px 'Liberation Sans',sans-serif;color:#1E1E30;white-space:nowrap;transform:scaleX(0.922);transform-origin:0 0;">Permissions legend</div>
<div class="a" style="left:318px;top:768.43px;font:bold 11.3px/11.3px 'Liberation Sans',sans-serif;color:#1E1E30;white-space:nowrap;">F</div>
<div class="a" style="left:338.6px;top:767.52px;font:11.2px/11.2px 'Liberation Sans',sans-serif;color:#1E1E30;white-space:nowrap;transform:scaleX(0.966);transform-origin:0 0;">= Full access (Read / Write / Delete)</div>
<div class="a" style="left:318px;top:785.43px;font:bold 11.3px/11.3px 'Liberation Sans',sans-serif;color:#1E1E30;white-space:nowrap;">W</div>
<div class="a" style="left:338.6px;top:784.52px;font:11.2px/11.2px 'Liberation Sans',sans-serif;color:#1E1E30;white-space:nowrap;transform:scaleX(0.966);transform-origin:0 0;">= Read / Write</div>
<div class="a" style="left:318px;top:802.43px;font:bold 11.3px/11.3px 'Liberation Sans',sans-serif;color:#1E1E30;white-space:nowrap;">R</div>
<div class="a" style="left:338.6px;top:801.52px;font:11.2px/11.2px 'Liberation Sans',sans-serif;color:#1E1E30;white-space:nowrap;transform:scaleX(0.966);transform-origin:0 0;">= Read</div>
<div class="a" style="left:318px;top:819.43px;font:bold 11.3px/11.3px 'Liberation Sans',sans-serif;color:#1E1E30;white-space:nowrap;">N</div>
<div class="a" style="left:338.6px;top:818.52px;font:11.2px/11.2px 'Liberation Sans',sans-serif;color:#1E1E30;white-space:nowrap;transform:scaleX(0.966);transform-origin:0 0;">= No access</div>
<div class="a" style="left:9.1px;top:878.90px;font:bold 11.7px/11.7px 'Liberation Sans',sans-serif;color:#F20000;white-space:nowrap;">By changing the permissions, the user account type will become custom.</div>
<div class="a" style="left:2px;top:898px;width:1578px;height:50px;background:#3F3F3F"></div>
<div class="a" style="left:26px;top:909px;width:150px;height:30px;background:#7E808C"></div>
<div class="a" style="left:26px;top:918.52px;width:150px;text-align:center;font:11.2px/11.2px 'Liberation Sans',sans-serif;color:#FFFFFF;white-space:nowrap;transform:scaleX(0.962)">Save</div>
<div class="a" style="left:189px;top:909px;width:150px;height:30px;background:#7E808C"></div>
<div class="a" style="left:189px;top:918.52px;width:150px;text-align:center;font:11.2px/11.2px 'Liberation Sans',sans-serif;color:#FFFFFF;white-space:nowrap;transform:scaleX(0.962)">Save and Return</div>
<div class="a" style="left:0;top:948px;width:1580px;height:1px;background:#CDCFD7"></div>
</body></html>
